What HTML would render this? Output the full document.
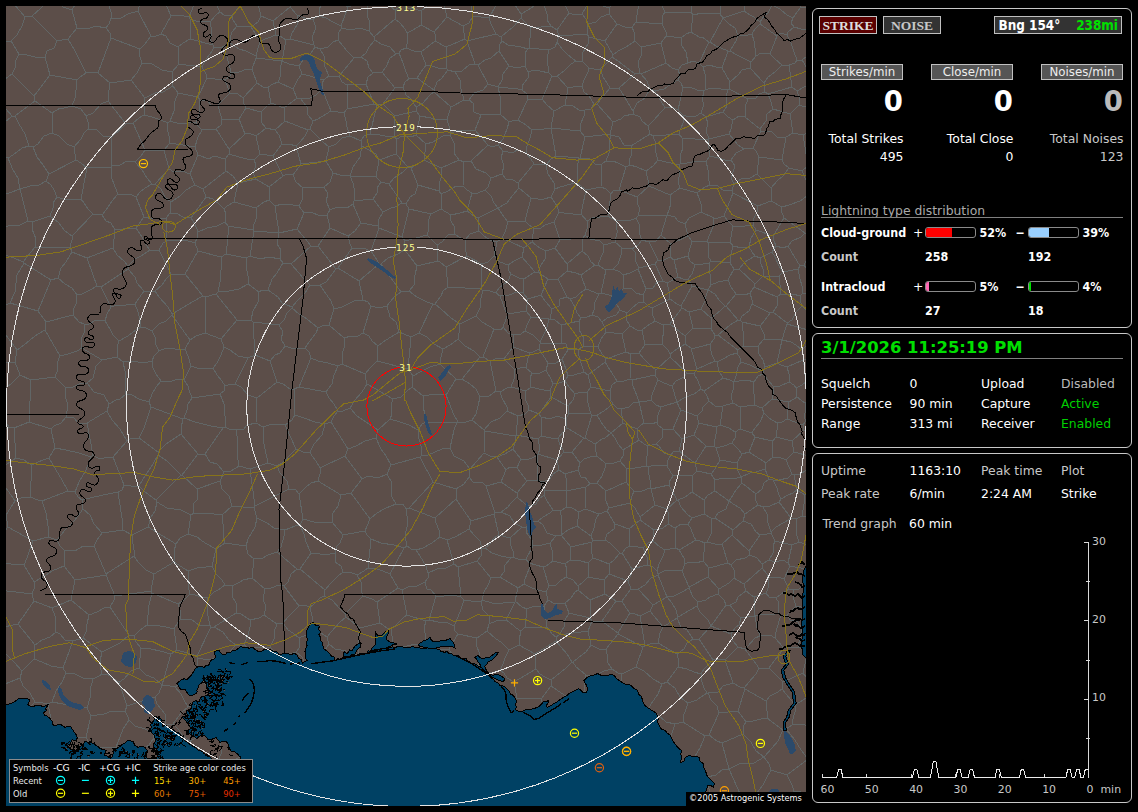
<!DOCTYPE html>
<html><head><meta charset="utf-8"><title>Lightning</title>
<style>
html,body{margin:0;padding:0;background:#000;}
body{width:1138px;height:812px;position:relative;overflow:hidden;font-family:"DejaVu Sans","Liberation Sans",sans-serif;font-size:12.4px;color:#fff;}
#map{position:absolute;left:6px;top:6px;width:800px;height:800px;background:#5c4e49;overflow:hidden;}
#map svg{position:absolute;left:0;top:0;}
.pn{position:absolute;left:812px;width:318px;border:1px solid #c8c8c8;border-radius:6px;background:#000;}
.t{position:absolute;white-space:nowrap;line-height:1;}
.r{text-align:right;}
.b{font-weight:bold;font-family:"DejaVu Sans Condensed","DejaVu Sans","Liberation Sans",sans-serif;}
.bw{font-weight:bold;}
.g{color:#c8c8c8;}
.btn{position:absolute;box-sizing:border-box;border:1px solid #c0c0c0;text-align:center;white-space:nowrap;}
.bar{position:absolute;box-sizing:border-box;width:51px;height:11px;border:1px solid #8a8a8a;border-radius:3px;overflow:hidden;background:#000;}
.bar i{display:block;height:100%;}
</style></head><body>
<div id="map"><svg width="800" height="800" viewBox="0 0 800 800" shape-rendering="crispEdges" fill="none" stroke-width="1">
<path d="M-14 391L-3 383L5 378L14 369M14 369L9 356M9 356L0 356L-14 354L-23 354M81 -18L76 -11L70 -3L66 4M66 4L57 1L53 -4L44 -6M-24 7L3 -8M100 -8L102 -3L105 6L105 12M66 4L71 22M105 12L103 18L100 22M71 22L82 23L89 20L100 22M819 720L806 721L795 718L786 719M802 753L795 744L789 734L780 723M786 719L780 723M3 421L-3 412L-6 402L-14 392M3 421L-22 432M14 369L25 374M25 374L23 416M8 422L3 421M8 422L23 416M105 12L115 12L122 8L132 5M137 -5L134 -2L132 5M100 22L104 27L105 32M105 32L134 43M132 5L145 30M134 43L138 39L145 30M104 77L92 67M104 77L125 74M92 67L105 32M125 74L131 67L133 63L136 57M134 43L133 48L136 57M703 36L693 57M703 36L696 31L693 31L685 26M685 26L680 28L675 32M675 32L676 40L680 46L682 57M693 57L687 55L682 57M607 49L612 45L620 41L629 35M607 49L606 51M629 35L635 41M635 41L636 48L632 56L634 67M634 67L629 68M606 51L612 55L620 61L629 68M588 98L591 98M588 98L583 90L578 86L576 80M583 62L582 66L578 74L576 80M583 62L588 63L594 63M594 63L597 71L601 77L604 82M591 98L604 82M606 51L600 58L594 63M629 68L613 82M613 82L604 82M440 261L442 281M440 261L434 256L432 255M432 255L411 260M427 298L429 298M427 298L421 296L411 291L403 285M442 281L437 285L435 290L429 298M403 285L408 279L409 269L411 260M554 234L549 242M554 234L548 216M526 236L527 228L527 222M526 236L534 242L540 245M548 216L539 219L535 222L527 222M540 245L549 242M526 236L518 242M518 242L516 251M529 266L516 251M529 266L532 266M540 245L539 253L535 259L532 266M789 699L789 706L787 713L786 719M789 699L797 694L805 689L813 688M332 360L322 357L312 355L305 352M332 360L328 369L326 378L320 386M305 352L293 381M320 386L293 381M-15 542L-8 533L-5 530L2 521M-44 498L-27 500L-16 506L0 509M0 509L2 521M49 371L55 377L59 381M49 371L25 374M23 416L45 423M59 381L59 389L62 400L60 411M45 423L48 420L55 417L60 411M49 371L52 363L51 357L54 350M59 381L67 381L73 378L81 377M54 350L62 348L71 345L76 342M76 342L96 354M81 377L87 372L90 360L96 354M122 260L122 263M122 260L129 253L135 250L144 244M122 263L129 271L131 277L138 285M144 244L153 244M153 244L165 268M165 268L160 273L156 279L149 285M149 285L144 285L138 285M32 305L4 297M32 305L40 316M39 324L40 316M39 324L29 330L18 339L11 344M11 344L-9 317M-8 301L-3 300L4 297M18 257L45 274M18 257L11 269L9 286L4 297M45 274L32 305M67 309L40 316M67 309L68 302L70 298L71 289M45 274L52 272M52 272L59 278L66 282L71 289M54 350L39 324M67 309L73 316L78 318M78 318L79 325L75 333L76 342M9 356L11 344M18 257L17 256M-9 246L2 250L8 252L17 256M109 224L105 217L100 215L96 209M109 224L107 242M107 242L81 252M96 209L87 208M87 208L66 230M81 252L66 246M66 230L66 234L64 241M64 241L66 246M130 222L125 222L117 223L109 224M130 222L136 231L140 239L144 244M122 260L118 255L111 249L107 242M95 281L122 263M95 281L91 280M91 280L81 252M44 210L53 217L59 225L66 230M44 210L47 202L47 197L51 191M51 191L57 193L67 194L75 193M75 193L78 197L82 203L87 208M52 272L55 262L60 256L66 246M71 289L76 288L84 284L91 280M26 216L26 223L30 233L29 241M26 216L44 210M29 241L64 241M17 256L29 241M92 67L88 66L80 67M71 22L62 33M62 33L69 45L74 55L80 67M14 183L-8 191M14 183L22 215M22 215L14 219L2 220L-7 222M26 216L22 215M104 77L103 84L102 95M66 100L75 103L80 110M66 100L69 92L70 84L71 74M71 74L74 71L80 67M80 110L87 107L95 98L102 95M-15 148L-5 149L2 152M14 183L14 183M2 152L7 164L12 172L14 183M51 191L48 184L45 179L40 175M14 183L24 180L33 179L40 175M81 162L75 157L70 154M81 162L75 193M40 175L43 168M70 154L43 168M125 74L139 92M136 57L146 58L156 64L166 66M166 66L167 80M139 92L149 87L157 86L167 80M591 98L607 116M613 82L627 105M607 116L615 113L618 110L627 108M627 105L627 108M717 12L723 18L729 22L732 29M717 12L704 36M732 29L730 35L724 45M704 36L710 40L715 42L722 45M724 45L722 45M745 56L737 52L731 49L724 45M745 56L750 50M750 50L749 42L748 35L746 28M746 28L738 30L732 29M697 61L703 59L710 61L716 62M697 61L693 57M716 62L722 45M703 36L704 36M744 62L745 56M744 62L736 64L732 69L724 76M724 76L716 62M766 -1L774 3L781 9L787 12M787 12L789 9L795 1M795 1L794 -7L789 -10L788 -16M812 2L795 1M766 -1L762 7L758 10L754 16M754 16L748 11L744 9L738 5M739 -13L739 -2L738 5M754 16L754 18M754 18L749 23L746 28M717 12L717 12M738 5L717 12M660 57L635 68M660 57L666 62L672 64M672 64L674 69L672 74M672 74L665 78L658 83L649 85M635 68L641 75L644 83M644 83L649 85M635 41L655 37M655 37L660 57M634 67L635 68M660 30L675 32M660 30L655 37M682 57L676 59L672 64M659 102L649 85M659 102L666 101L672 104M672 104L677 82M677 82L675 77L672 74M627 105L631 97L639 92L644 83M659 102L655 106L647 115L642 120M642 120L636 115L634 111L627 108M440 261L461 250M475 283L442 281M475 283L476 258M476 258L461 250M373 -6L379 -5L385 1L389 4M397 -1L392 2L389 4M393 47L395 44L400 42M393 47L397 57L400 66L403 73M400 42L408 45L415 46M415 46L420 59M420 59L415 66L411 72M403 73L411 72M390 48L393 47M390 48L384 41L375 38L369 34M369 34L368 31M368 31L376 24L383 18L389 13M401 27L399 23L394 17L389 13M401 27L402 34L400 42M441 63L432 62L426 60L420 59M441 63L440 41M440 41L429 35M429 35L415 46M368 31L363 25M389 13L390 10L389 4M363 25L364 17L361 9L361 -1M325 -11L342 1M342 1L348 -1L353 -3M617 269L624 267L632 263M617 269L617 275L618 282M632 263L640 283M618 282L625 282L630 287L637 289M640 283L637 289M763 554L767 547L767 540L769 535M763 554L769 556L777 554L782 557M782 557L786 539M769 535L786 539M793 536L786 539M793 536L802 539M782 557L784 560M784 560L800 563M813 591L797 580M800 563L801 570L797 580M813 688L797 667M801 649L797 667M807 613L796 623M796 623L792 641M801 649L799 644L792 641M789 699L776 683M776 683L777 676M797 667L777 676M761 712L761 705L760 695M761 712L755 713L747 715L740 716M760 695L739 683M739 683L732 705M740 716L732 705M777 724L780 723M777 724L761 712M776 683L772 686L764 690L760 695M777 724L772 735L766 742L758 751M758 751L750 745L745 736L737 728M737 728L737 721L740 716M802 753L781 769M781 769L786 779L788 785M817 789L788 785M758 751L758 751M781 769L765 764M758 751L763 758L765 764M279 340L274 347L269 349L264 355M279 340L275 333L277 326L273 319M247 316L273 319M247 316L249 349M249 349L264 355M305 352L303 346L299 342M299 342L293 342L285 342L279 340M271 376L277 378L284 383L288 383M271 376L264 355M293 381L288 383M251 392L271 376M251 392L242 389L235 381L229 378M242 352L229 378M242 352L249 349M475 283L477 285M429 298L435 303L445 312L454 318M477 285L474 295L474 302L470 310M454 318L470 310M9 495L15 492L24 491M9 495L-11 466M24 491L26 459M-11 466L10 452M10 452L18 454L26 459M0 509L9 495M8 422L10 452M60 411L68 412L72 417L81 417M103 398L98 389L88 386L81 377M103 398L101 405M101 405L81 417M45 423L49 442M26 459L32 456L37 454L43 452M43 452L49 442M103 398L110 394L114 393L120 388M96 354L111 351M111 351L117 356M117 356L119 365L119 375L120 388M133 432L126 432L121 435M133 432L138 422L141 413L145 401M145 401L143 396M101 405L106 414L114 423L121 435M120 388L126 389L133 393L143 396M251 392L250 417M229 378L222 379L219 380M219 380L218 385L214 388M250 417L241 419L238 423L230 424M230 424L223 423L219 421M219 421L219 410L218 398L214 388M129 298L132 306L134 314L135 321M129 298L120 299L111 299L105 301M105 301L101 308L99 315M99 315L104 323L107 329L113 335M113 335L122 330L127 326L135 321M95 281L105 301M138 285L129 298M78 318L83 318L90 314L99 315M111 351L111 341L113 335M51 35L48 42L41 45L39 51M51 35L26 10M39 51L29 51L21 49L13 48M19 11L26 10M19 11L16 20L11 29L5 35M5 35L13 48M62 33L51 35M44 69L39 51M44 69L71 74M44 -6L26 10M44 69L28 90M28 90L6 68M6 68L9 62L10 54L13 48M3 -8L19 11M-19 34L-9 36L-3 36L5 35M-7 73L-1 73L6 68M6 110L0 103L-8 99L-12 92M6 110L-19 132M29 95L9 110M29 95L46 107M9 110L13 118L19 128L23 140M46 107L46 127M46 127L38 130L32 138L27 141M23 140L27 141M28 90L29 95M6 110L9 110M66 100L58 102L54 102L46 107M2 152L7 149L16 142L23 140M80 110L82 116L82 123M82 123L78 127L75 133L68 141M68 141L61 138L53 130L46 127M68 141L70 154M43 168L37 159L31 151L27 141M216 41L224 37M216 41L220 48L223 58L225 66M224 37L233 43L240 45L250 50M225 66L233 66L241 63L246 63M246 63L250 52M250 50L250 52M280 34L274 30L270 29M280 34L276 55M276 55L250 52M250 50L254 35M254 35L270 29M284 1L267 15M284 1L291 9M280 34L284 33M284 33L286 27L291 19L291 9M267 15L270 29M231 20L245 21M231 20L227 14L226 10M226 10L239 -7M245 21L252 16L255 10M255 10L252 -2M224 37L224 32L226 26L231 20M254 35L251 30L245 21M267 15L255 10M284 1L284 -1M284 33L308 39M291 9L301 13L307 13M307 13L310 22L306 31L308 39M317 -10L318 -4L313 3L313 10M307 13L313 10M342 1L335 20M313 10L320 12L327 16L335 20M363 25L354 22L344 24L336 22M336 22L335 20M308 39L309 41M332 34L327 36L322 41L314 43M332 34L333 26L336 22M309 41L314 43M237 92L251 77M237 92L232 88L224 87M251 77L246 63M225 66L224 70L219 74M219 74L224 87M81 162L105 161M96 209L100 204L106 195L112 188M112 188L109 181L105 170L105 161M130 222L135 215L138 211M161 235L160 212M161 235L157 237L153 244M160 212L152 212L147 213L138 211M112 188L117 188L124 188L130 191M138 211L130 191M166 66L173 58M167 80L172 87M172 87L192 91M192 91L201 72M201 72L200 68L196 61M173 58L180 59L189 60L196 61M216 41L208 41M201 72L209 73L219 74M196 61L201 52L206 45L208 41M226 10L218 9L214 6M208 41L207 39M207 39L204 33L206 26L204 16M204 16L210 9L214 6M209 -4L214 6M155 28L160 30L164 37L172 41M155 28L165 10M165 10L173 9L183 11M172 41L177 37L184 33M184 33L184 27L185 17L184 13M183 11L184 13M145 30L148 31L155 28M173 58L172 41M157 -8L165 10M190 -8L188 -2L186 4L183 11M207 39L184 33M204 16L198 15L190 15L184 13M647 130L673 128M647 130L644 128M644 128L642 120M672 104L677 109M677 109L678 115L674 124L673 128M647 130L650 138L649 144L652 154M652 154L673 159M674 158L673 159M674 158L675 147L677 142L676 132M676 132L673 128M717 106L721 100L720 91L722 83M717 106L700 111M700 111L695 107M695 107L698 98L696 94L698 85M722 83L715 83L705 82L699 84M699 84L698 85M677 109L683 111L690 110L695 107M676 132L702 134M702 134L703 133M703 133L700 125L702 118L700 111M677 82L684 81L691 84L698 85M697 61L699 68L699 76L699 84M724 76L723 83M723 83L722 83M800 415L807 413L817 411M800 415L798 411L800 403L799 397M813 393L805 394L799 397M714 -13L714 8M714 8L704 7L696 7L687 9M686 -4L686 -1L685 6M687 9L685 6M717 12L714 8M685 26L686 17L687 9M629 35L628 26L626 21M660 30L660 26L656 18M626 21L630 16M630 16L656 18M685 6L659 6M655 -6L657 2L659 6M656 18L656 11L659 6M607 49L599 35M626 21L619 21L611 18M611 18L599 35M583 62L578 57L576 55M599 35L583 31M576 55L577 46L582 38L583 31M588 98L585 103L579 104M576 80L567 81L562 82M579 104L573 104L567 100L559 99M559 99L562 82M607 116L604 128M579 104L578 110L574 119L574 125M604 128L579 131M574 125L579 131M644 128L625 140M604 128L605 129M625 140L618 139L613 131L605 129M432 255L431 245L431 239M459 234L459 241L461 250M459 234L455 232L448 228M448 228L442 229L436 236L431 239M435 188L435 203M435 188L442 185L450 180L457 180M461 205L466 187M461 205L454 207L445 209M445 209L435 203M466 187L461 184L457 180M453 154L458 156M453 154L435 162M435 188L433 185M435 162L436 168L433 179L433 185M457 180L458 156M548 216L553 206M527 222L522 218L519 215M553 206L551 200L545 191M545 191L538 193L532 193L525 192M519 215L525 192M397 -1L402 2L409 3L415 5M428 -3L421 0L415 5M401 27L407 24L415 19M415 5L415 19M429 35L430 30L428 26M415 19L428 26M403 285L395 286M411 260L408 256L402 248L398 244M398 244L392 248L382 252L375 258M375 258L395 286M625 348L624 373M625 348L633 347M624 373L626 374M626 374L649 369M649 369L650 364M650 364L643 358L638 353L633 347M664 351L664 348M664 351L681 367M664 348L671 343L679 338M681 367L688 368M679 338L685 342M685 342L691 363M691 363L688 368M490 287L494 290M490 287L493 282L502 275L505 268M494 290L503 289L511 286L517 287M505 268L513 272L518 273M518 273L517 287M477 285L481 284L490 287M497 321L502 308M497 321L495 324L488 323M502 308L499 304L497 298L494 290M488 323L483 320L476 316L470 310M502 259L503 265L505 268M502 259L494 256L488 250M488 250L482 256L476 258M529 266L524 269L518 273M516 251L508 255L502 259M502 308L520 305M517 287L522 293M520 305L522 293M532 266L536 269L542 273M542 273L535 289M535 289L522 293M554 234L577 232M549 242L561 258M561 258L576 245M576 245L576 237L577 232M581 215L575 208M581 215L581 223L579 229M553 206L558 207L567 208L575 208M579 229L577 232M607 263L612 258L615 249L616 242M607 263L600 264M609 236L616 242M609 236L598 239M598 239L597 247L595 251L592 259M600 264L598 263L592 259M576 245L582 250L585 256L589 259M579 229L584 233L594 235L598 239M592 259L589 259M552 273L561 265M552 273L561 291M561 265L570 267L575 269M561 291L564 293M564 293L570 291L574 287L580 283M580 283L575 269M542 273L552 273M561 258L561 265M546 303L539 295L535 289M546 303L553 300L554 293L561 291M589 259L575 269M620 346L600 353M620 346L616 328M600 353L596 348L592 341M592 341L595 333L600 326M616 328L600 326M625 348L620 346M624 373L618 375L611 375M600 353L599 356M599 356L611 375M811 512L802 510L796 510M793 536L791 530L790 520L790 513M790 513L796 510M663 479L671 494M663 479L645 483M671 494L661 503M661 503L649 499M645 483L649 499M805 603L790 600M797 580L793 583L787 584M787 584L787 591L790 600M796 623L792 616L784 614L781 609M790 600L781 609M792 641L783 641L777 641M777 676L763 662M763 662L768 655L774 648L777 641M749 610L757 608L765 609L772 607M749 610L750 616L751 622L754 630M772 607L775 609M775 609L773 615L770 626L769 632M754 630L764 629L769 632M781 609L775 609M769 632L777 641M788 785L780 801M765 764L761 771L757 779L750 788M750 788L755 796L761 800L767 807M703 798L704 787L702 779L701 771M703 798L733 793M733 793L735 790M735 790L723 763M701 771L710 769L717 763L723 763M723 763L723 763M696 807L698 801L703 798M694 808L685 799L678 793L668 783M682 761L668 783M682 761L701 771M734 818L733 793M750 788L744 790L735 790M758 751L748 757L735 757L723 763M737 728L716 737M716 737L723 763M328 303L325 295L318 285L314 279M328 303L323 319M286 302L286 301M286 302L293 308L301 313L312 322M286 301L292 294L299 287L304 279M314 279L304 279M323 319L316 320L312 322M245 314L247 305L252 296L253 286M245 314L247 316M273 319L278 314L281 307L286 302M253 286L256 284L262 284M262 284L272 291L276 297L286 301M299 342L303 336L310 327L312 322M262 284L266 273L271 267L277 257M277 257L285 258M285 258L293 267L297 272L304 279M294 519L289 520L279 524M294 519L297 513M297 513L293 488M279 524L268 522L261 517L251 512M251 512L248 502M249 500L248 502M249 500L283 483M283 483L289 483L293 488M326 516L327 507L332 500L335 489M326 516L317 516L308 516L297 513M335 489L312 475M293 488L300 481L305 477L312 475M342 443L325 416M342 443L350 440L359 435L370 432M370 432L372 424M372 424L360 416L351 410L344 402M344 402L337 405L332 405M332 405L328 410L325 416M384 413L372 424M384 413L394 416L403 419L412 424M415 450L416 443L413 433L412 424M415 450L414 451M370 432L375 443L380 450L385 459M385 459L414 451M332 360L336 358M323 319L338 332M336 358L336 348L338 342L338 332M365 300L362 296L357 294M365 300L357 327M357 294L348 295L336 301L328 303M357 327L352 330L345 330L338 332M384 413L386 408L385 399L387 393M344 402L349 394L356 386L361 378M387 393L361 378M320 386L323 392L328 398L332 405M336 358L359 368M361 378L360 374L359 368M412 424L416 418L420 416M387 393L395 391L401 385L406 381M406 381L417 390M417 390L417 401L419 408L420 416M415 450L422 449L436 443L444 442M444 442L446 433L448 424L451 416M420 416L451 416M8 716L-1 715L-5 714M8 716L29 696M-16 684L14 672M29 696L24 687L17 680L14 672M39 740L43 732L48 728M39 740L17 738M17 738L8 716M48 728L42 698M29 696L37 697L42 698M-7 622L12 618M-9 643L1 649L8 656L16 665M29 639L12 618M29 639L28 653M28 653L16 665M14 672L16 665M149 285L153 291L162 301L166 308M146 325L153 318L160 315L166 309M146 325L140 322L135 321M166 308L166 309M179 268L165 268M179 268L197 290M166 308L178 301L186 296L197 290M117 356L126 355L138 357L146 355M143 396L146 388L150 381L155 375M146 355L147 362L150 368L155 375M146 325L149 331L150 339L153 345M146 355L148 350L153 345M276 55L276 55M251 77L257 81L262 81M262 81L267 78L272 76M276 55L274 63L275 69L272 76M309 41L305 47L297 54L293 60M276 55L283 58L293 60M369 34L363 41L360 47L355 51M332 34L337 40L341 45L348 52M355 51L348 52M390 48L384 52L380 61L376 66M376 66L367 67M355 51L361 55L363 62L367 67M314 43L318 50L319 61L323 70M348 52L333 70M323 70L333 70M367 67L362 71L360 78M360 78L356 78L348 78L341 79M333 70L336 76L341 79M192 91L194 94M224 87L212 99M194 94L201 94L205 99L212 99M240 102L238 98L237 92M240 102L233 113M212 99L216 114M233 113L216 114M233 113L239 128M216 114L215 119L210 123M210 123L223 143M223 143L239 128M787 12L785 17L788 21M788 21L795 23L804 23L811 27M750 50L755 47L764 48M754 18L771 30M764 48L771 30M788 21L782 26L781 29M781 29L775 27L771 30M805 48L800 51L796 54M809 75L796 54M781 29L785 37L788 46L791 54M796 54L791 54M784 108L787 127M784 108L787 105L793 99M810 104L793 99M807 124L797 129M797 129L787 127M791 85L809 75M791 85L794 94L793 99M703 133L723 128M717 106L722 111L727 114M723 128L725 123L727 114M723 83L742 93M742 93L739 101L739 111M727 114L733 110L739 111M803 159L800 148L799 141L797 129M603 2L614 -9M603 2L597 0L594 -6L588 -10M630 16L631 9L632 3L632 -4M603 8L611 18M603 8L603 2M576 55L570 55M562 82L551 70M570 55L565 58L558 65L551 70M559 99L548 105M551 70L546 70M546 70L536 93M548 105L541 99L536 93M574 125L545 122M548 105L545 122M579 131L574 152M574 152L583 152L589 158L596 158M605 129L603 137L603 147L600 155M596 158L600 155M571 177L565 178L554 181L549 183M571 177L572 170L571 162L573 152M549 183L548 177L542 168L540 159M573 152L550 150M540 159L545 153L550 150M575 208L580 184M545 191L549 183M580 184L571 177M574 152L573 152M580 184L595 181M596 158L595 181M545 122L545 122M545 122L550 150M520 147L525 153L528 158M520 147L521 140L524 132L526 124M528 158L540 159M545 122L538 123L534 123L526 124M445 101L458 94M445 101L428 86M458 94L455 83L454 74L449 66M428 86L428 84M428 84L431 76L435 73L442 64M442 64L449 66M441 63L442 64M411 72L428 84M403 203L425 208M403 203L396 231M425 208L422 215L423 223L421 229M421 229L399 235M396 231L399 235M445 209L444 213L449 222L448 228M435 203L425 208M431 239L421 229M398 244L399 235M518 242L496 232M519 215L502 216M502 216L499 226L496 232M488 250L491 236M496 232L491 236M459 234L464 228L473 225M491 236L484 234L478 230L473 225M461 205L468 210L472 212M473 225L472 212M513 182L507 189L501 197L492 202M513 182L512 177M512 177L507 174L500 173L496 168M496 168L485 172M485 172L482 181L479 184M479 184L485 190L488 197L492 202M492 202L492 202M525 192L513 182M502 216L498 211L492 202M528 158L522 165L517 171L512 177M520 147L511 144L507 147L497 145M497 145L495 152L498 159L496 168M492 139L497 145M492 139L486 141L482 139M482 139L465 155M465 155L470 163L480 167L485 172M466 187L472 187L479 184M465 155L458 156M472 212L492 202M467 10L463 17L457 20M467 10L462 -15M457 20L441 11M438 -1L441 11M483 12L467 10M483 12L490 -1M440 41L459 33M459 33L457 20M428 26L441 11M346 242L354 242L357 242L365 245M346 242L332 262M332 262L353 275M353 275L373 258M365 245L371 254L373 258M373 222L371 228L367 239L365 245M373 222L372 220M342 230L349 225L355 217M342 230L344 238L346 242M355 217L372 220M357 294L353 275M330 263L327 267L320 276L314 279M330 263L332 262M375 258L373 258M381 300L373 302L365 300M381 300L384 296L389 290L395 286M373 222L396 231M639 339L656 338M639 339L636 324M656 338L656 333L658 326L657 319M636 324L641 320L649 315M649 315L657 319M650 364L664 351M633 347L639 339M664 348L662 344L656 338M624 320L616 328M624 320L631 324L636 324M664 318L657 319M664 318L679 330M679 330L679 338M646 302L642 300L638 296M646 302L646 307L649 315M638 296L632 297L626 302L621 307M624 320L620 313L621 307M664 318L676 302M676 302L675 300M646 302L664 293M675 300L671 298L664 293M681 367L678 371L670 375L666 380M695 383L692 375L688 368M695 383L688 388L680 391L671 396M671 396L666 380M649 369L652 374M652 374L658 377L666 380M683 306L695 303M683 306L685 314L687 322M695 303L705 312M687 322L705 323M705 323L706 318L705 312M679 330L687 322M676 302L683 306M640 283L647 282L651 276L657 275M637 289L638 296M664 293L663 285L661 277M657 275L661 277M675 300L686 280M695 303L699 295L700 290L702 284M686 280L702 284M608 291L610 297L614 304M608 291L603 289L595 287M614 304L610 309L601 312L596 316M595 287L593 288M593 288L589 296L588 304L586 309M586 309L592 311L596 316M618 282L613 287L608 291M621 307L614 304M617 269L614 266L607 263M600 264L595 287M600 326L599 322L596 316M580 283L593 288M575 312L571 307L569 301L564 293M575 312L581 311L586 309M737 515L745 518L750 526L754 529M737 515L727 524M726 529L743 545M726 529L727 524M743 545L754 529M744 549L751 552L756 558M744 549L743 545M756 558L763 554M769 535L765 527M765 527L761 528L754 529M757 501L761 508L762 517L765 526M757 501L764 500L773 496M773 496L785 512M765 526L770 521L779 516L785 512M739 508L737 515M739 508L752 499M752 499L757 501M765 527L765 526M790 513L785 512M673 445L689 457M673 445L667 446L665 449M667 470L687 469M667 470L661 460M687 469L691 465M665 449L662 454L661 460M689 457L691 465M676 433L673 445M676 433L688 429M689 457L700 440M688 429L700 440M739 508L734 502L727 498L723 495M752 499L749 493L750 488M750 488L736 477M723 495L727 489L730 484L736 477M716 737L711 735L703 729M732 705L713 707M713 707L703 729M681 761L673 756L668 749L660 746M681 761L688 752L694 742L699 730M669 718L660 746M669 718L677 716M677 716L699 730M681 761L682 761M703 729L699 730M682 518L675 518L669 522M682 518L686 512M671 494L672 494M661 503L663 509L662 518M669 522L662 518M686 512L681 508L675 501L672 494M667 470L663 476L663 479M687 469L686 486M686 486L679 491L672 494M645 483L644 482M661 460L655 459L648 459L642 461M642 461L643 469L644 474L644 482M649 499L634 511M628 485L636 485L644 482M628 485L626 490L624 497M634 511L629 502L624 497M662 518L657 522L648 524M648 524L634 514M634 511L634 514M778 573L783 583M778 573L772 571L762 571M783 583L775 588L770 592M762 571L763 580L760 587M760 587L763 591L770 592M784 560L778 573M787 584L783 583M756 558L756 562M756 562L761 568L762 571M772 607L773 597L770 592M749 610L748 610M748 610L748 591M748 591L754 589L760 587M763 662L753 662M754 630L749 632L742 640L739 643M753 662L739 643M739 683L738 682M753 662L750 668L743 676L738 682M748 610L735 612M735 612L733 619L729 622L725 628M725 628L727 635L732 641M732 641L739 643M601 810L597 806L594 798M558 822L561 812L565 800L565 789M594 798L565 789M545 778L563 785M545 778L525 809M565 789L563 785M541 772L545 778M541 772L543 761L544 753L546 745M546 745L552 743M552 743L582 759M563 785L582 759M668 783L668 783M660 746L653 747M653 747L649 757L644 762L639 771M668 783L639 771M231 314L210 288M231 314L245 314M210 288L212 286M253 286L246 281L242 278M212 286L223 285L233 283L242 278M50 626L44 631L36 634L29 639M50 626L49 619L49 610L46 602M12 618L28 595M46 602L28 595M-7 584L26 588M26 588L28 595M250 713L249 708L253 702L253 695M250 713L255 714L264 719L269 720M253 695L281 685M269 720L273 714L282 706L286 697M286 697L284 691L285 687M285 687L285 686M285 686L281 685M251 512L249 521L242 533L240 540M248 502L226 500M216 509L226 500M216 509L217 518L217 530L219 537M240 540L219 537M182 565L183 574L182 580L184 588M182 565L191 562L200 561L206 560M184 588L189 589L195 591L202 592M202 592L208 586L212 584L219 579M219 579L216 574L210 568L206 560M168 556L182 565M168 556L169 548L168 545L170 538M170 538L174 532L182 528M182 528L191 531L199 537L210 543M206 560L210 543M185 509L182 528M185 509L188 507M216 509L208 508L198 507L188 507M210 543L219 537M250 417L257 421M230 424L232 436L231 447L233 460M244 463L233 460M244 463L262 457M262 457L259 443L257 433L257 421M244 463L249 500M283 483L281 475L274 467L271 460M262 457L271 460M671 396L671 396M671 396L655 401M652 374L649 381L646 389L645 394M655 401L650 399L645 394M626 374L627 380L631 390L633 396M633 396L633 396M633 396L641 395L645 394M297 733L302 735L309 739L317 743M297 733L300 727L302 718M317 743L332 737M302 718L311 716L317 710L327 709M327 709L338 723M332 737L333 729L338 723M381 468L386 477L385 489L390 498M381 468L372 472L362 470L356 473M356 473L345 487M345 487L364 513M364 513L371 507L380 502L390 498M339 450L356 473M339 450L342 443M385 459L381 468M339 450L314 462M335 489L345 487M312 475L314 468L314 462M488 323L477 351M454 318L453 327L452 333M477 351L474 351M474 351L468 345L459 340L452 333M427 298L413 327M413 327L421 331L428 338L437 343M452 333L447 337L444 339L437 343M440 389L444 399L447 407L452 416M440 389L450 373M450 373L456 373M456 373L464 378L470 383L474 391M474 391L472 400L470 408L466 414M466 414L460 416L452 416M417 390L423 389L431 388L440 389M451 416L452 416M406 381L406 374L407 370M407 370L414 366L424 361L434 358M434 358L450 373M474 351L456 373M437 343L435 351L434 358M477 351L484 355M484 355L490 385M490 385L483 390L474 391M501 405L501 401L496 392L494 386M501 405L494 412L485 416L478 424M478 424L466 414M494 386L490 385M67 635L57 662M67 635L77 632M77 632L96 646M57 662L60 667M60 667L67 667L77 672L87 673M96 646L94 655L94 660L96 668M96 668L93 670L87 673M50 626L54 628L59 634L67 635M28 653L36 656L45 660L57 662M83 609L81 618L80 626L77 632M83 609L65 594M65 594L46 602M123 629L114 637L104 642L96 646M123 629L104 601M104 601L98 602L91 606L83 609M42 698L46 696M46 696L50 685L56 676L60 667M81 702L67 699L57 698L46 696M81 702L84 692L84 684L87 673M230 607L208 621M230 607L235 608L244 614M244 614L244 621L242 629L238 639M238 639L230 639M230 639L223 634L217 626L208 621M39 740L42 749L46 755L47 766M17 738L12 745L5 752L2 756M2 756L20 777M47 766L42 769L39 774M20 777L39 774M-18 790L10 795M15 809L11 800L10 795M149 775L146 778M149 775L142 769L136 757L132 750M132 750L118 750M118 750L113 763L113 774L108 785M146 778L133 779L121 782L108 785M2 756L-3 757M20 777L10 795M133 432L152 446M145 401L177 413M152 446L160 438L166 434L175 428M175 428L175 422L177 413M186 392L182 398L181 404L178 412M186 392L183 384L182 380L178 374M155 375L163 376L172 373L178 374M177 413L178 412M219 421L217 422M214 388L186 392M178 412L189 416L205 420L217 422M81 417L87 449M121 435L107 451M107 451L98 452L92 452L87 449M49 442L60 444L73 447L85 451M87 449L85 451M152 449L161 455L170 464L175 469M152 449L147 458L139 470L133 480M175 469L150 494M133 480L138 485L143 489L150 494M152 446L152 449M107 451L118 479M133 480L125 480L118 479M185 509L175 504L161 502L151 496M170 538L142 521M151 496L149 505L145 511L142 521M118 479L116 484L112 486M112 486L114 499L116 512L117 524M150 494L151 496M142 521L126 529M126 529L117 524M184 334L190 330L199 327M184 334L179 343M179 343L182 350L185 360M185 360L191 362L202 363L207 362M207 362L211 357L215 349L218 341M199 327L215 333M215 333L218 341M166 309L184 334M197 290L199 291M199 291L199 327M153 345L160 342L169 343L179 343M178 374L185 360M219 380L216 375L211 369L207 362M242 352L232 350L224 344L218 341M231 314L215 333M210 288L199 291M291 223L298 207M291 223L296 229L302 236L305 240M298 207L304 206L315 210L321 209M312 240L305 240M312 240L324 222M324 222L323 217L321 209M293 200L298 207M293 200L287 199L276 198L269 200M269 200L273 227M273 227L291 223M285 258L305 240M330 263L312 240M342 230L324 222M403 73L399 76L397 81M428 86L424 89L417 97L410 101M397 81L400 89L405 93L410 101M376 66L389 82M397 81L389 82M293 60L296 68M272 76L287 83M296 68L292 73L287 83M323 70L319 73M296 68L304 70L312 73L319 73M189 141L164 137M189 141L191 134L192 131L196 124M190 116L192 120L196 124M190 116L181 117L174 118L164 115M164 137L163 130L161 121L162 117M164 115L162 117M194 94L193 102L193 108L190 116M210 123L205 123L196 124M172 87L169 95L168 105L164 115M139 92L138 109M138 109L146 111L155 114L162 117M106 159L114 159L121 155L129 156M106 159L105 151L105 139L106 131M106 131L120 118M129 156L135 150L139 144M139 144L127 117M120 118L127 117M105 161L106 159M130 191L134 186L139 182L146 178M146 178L141 172L136 164L129 156M82 123L91 124L97 130L106 131M102 95L120 118M138 109L133 112L127 117M164 137L158 144M158 144L139 144M786 81L783 59M786 81L762 88M758 77L762 71L769 66L776 59M758 77L758 80L759 86M776 59L783 59M759 86L762 88M791 85L786 81M791 54L789 57L783 59M767 103L774 105L784 108M767 103L764 93L762 88M744 62L758 77M764 48L769 53L776 59M742 93L750 92L753 88L759 86M767 103L761 108L760 115L754 123M754 123L739 111M753 151L750 145L747 142M753 151L776 154M747 142L755 125M755 125L765 125L771 131L780 131M776 154L780 131M738 143L732 139L728 134L723 128M738 143L747 142M754 123L755 125M787 127L780 131M803 159L796 165M783 162L796 165M783 162L778 158L776 154M674 158L681 157L692 155L700 155M673 159L674 167L672 175L674 182M674 182L691 187M691 187L699 181L704 179M704 179L702 170L702 164L700 155M702 134L704 150M738 143L730 147L725 154M725 154L719 154L712 152L704 150M704 150L700 155M685 342L689 342L697 340L704 338M705 323L709 329M709 329L708 333L704 338M691 363L709 355M704 338L705 345L706 349L709 355M717 372L713 365L711 356M717 372L698 385M698 385L695 383M711 356L709 355M603 8L595 11L590 16L582 18M583 31L581 28M582 18L581 28M570 55L562 49L556 43L551 36M543 67L546 70M543 67L542 60L541 52L543 44M551 36L549 41L543 44M581 28L553 30M551 36L553 30M522 66L528 64L534 65L543 67M522 66L519 60M519 60L519 57L519 47L522 43M522 43L523 42M543 44L523 42M516 84L521 88L522 93M516 84L508 82L502 82L492 81M522 93L512 114M492 81L494 90L494 100L494 108M494 108L503 116M503 116L509 114L512 114M522 66L522 72L516 80L516 84M536 93L522 93M492 81L492 81M492 81L496 74L497 68L503 60M519 60L511 62L503 60M526 124L520 119L512 114M492 81L482 78M482 78L477 84L468 87L463 94M475 109L468 106L467 97L463 94M475 109L494 108M492 139L497 133L501 123L503 116M482 139L469 124M469 124L475 109M581 215L586 212L594 211L602 210M595 181L600 183L605 188M605 188L602 210M609 236L611 227L611 224L610 215M602 210L610 215M493 45L493 40L496 35M493 45L485 52L479 54L472 59M461 35L490 28M461 35L469 58M496 35L495 31M469 58L472 59M490 28L495 31M503 60L493 45M522 43L515 41L502 39L496 35M482 78L472 59M459 33L461 35M483 12L485 18L490 28M449 66L456 65L463 59L469 58M463 94L458 94M636 234L643 236M636 234L632 239L626 243M643 236L652 254M626 243L630 247L629 254L633 262M633 262L649 258M649 258L652 254M661 209L655 229M661 209L632 210M655 229L650 235L643 236M632 210L630 212M630 212L634 220L633 227L636 234M616 242L626 243M630 212L623 215L617 214L610 215M665 238L655 229M665 238L664 251M664 251L658 254L652 254M632 263L633 262M657 275L649 258M705 312L709 309L715 304L719 300M702 284L702 284M719 300L713 294L709 288L702 284M682 250L684 255L689 259M682 250L668 254M668 254L672 271M689 259L686 268L682 273M672 271L677 273L682 273M664 251L668 254M661 277L672 271M686 280L682 273M703 257L697 258L689 259M703 257L705 279M705 279L702 284M562 400L563 407M562 400L545 391M545 391L533 408M560 413L551 410L544 413L535 411M560 413L563 407M533 408L535 411M585 408L563 407M585 408L583 401L581 393L581 386M562 400L567 394L569 388M569 388L575 386L581 386M599 356L582 369M604 385L606 379L611 375M604 385L585 381M585 381L582 369M497 321L502 327L507 329M520 305L525 311M507 329L515 328L519 325M525 311L521 319L519 325M569 388L563 381L559 375M585 381L581 386M582 369L578 366M578 366L568 369L562 370M559 375L562 370M592 341L577 340M578 366L576 360L573 350L572 344M577 340L572 344M575 312L573 315M577 340L578 332L573 324L573 315M800 415L797 419M783 396L781 413M783 396L791 391M799 397L791 391M781 413L797 419M714 454L710 442M714 454L731 457M710 442L718 440L726 437M726 437L732 443L736 448M731 457L736 448M705 468L696 466L691 465M705 468L709 463L714 454M700 440L708 440M708 440L710 442M735 471L735 471M735 471L732 465L731 457M705 468L709 474M709 474L717 472L727 473L735 471M675 404L673 401L671 396M675 404L691 410M698 385L701 390L703 395M691 410L696 405L697 401L703 395M676 433L667 423M667 423L675 404M688 429L693 417M691 410L693 417M708 440L709 433L710 428L710 421M693 417L710 421M723 495L709 485M723 495L720 503L712 507L709 512M709 485L702 489L698 494M698 494L698 508M698 508L705 512M705 512L709 512M723 495L723 495M709 474L708 479L709 485M736 477L735 471M727 524L709 512M686 486L698 494M686 512L698 508M716 538L709 538L701 536M716 538L726 529M701 536L705 528L705 519L705 512M748 591L740 585M735 612L729 606L724 599M724 599L730 596L732 591L740 585M756 562L738 578M740 585L738 578M669 718L660 716L652 709L641 706M677 716L677 711L680 703L682 697M661 676L669 682L674 691L682 697M661 676L656 678M656 678L652 688L645 698L641 706M653 747L644 744L640 737L630 731M633 713L630 731M633 713L639 707M641 706L639 707M597 707L611 708L623 710L633 713M597 707L596 700M639 707L632 696L625 686L615 678M596 700L603 694L609 683L615 678M630 661L616 668M630 661L638 665L647 673L656 678M615 678L616 668M587 758L602 770M587 758L591 749L590 741L595 736M621 738L595 736M621 738L622 769M622 769L602 770M594 798L596 790L601 778L602 770M582 759L587 758M566 720L563 727L555 735L552 743M566 720L589 723M589 723L595 736M597 707L589 723M630 731L625 736L621 738M630 775L636 772L639 771M630 775L622 769M654 805L629 794M616 810L621 806L626 798L629 794M668 783L654 805M630 775L631 780L632 790L629 794M232 718L238 720M232 718L217 727M238 720L244 744M217 727L214 735L216 745L213 753M213 753L219 754L226 756M226 756L244 744M294 813L301 795M325 799L312 790M325 799L323 809L325 815M301 795L308 794L312 790M273 728L271 736L262 744L260 751M273 728L294 734M294 734L292 741L290 750L287 762M260 751L263 758M263 758L279 766M287 762L285 766L279 766M238 720L250 713M269 720L273 728M244 744L260 751M297 733L294 734M302 718L286 697M317 743L316 750L315 757L312 766M312 766L304 763L296 761L287 762M236 777L242 779M236 777L234 771L228 765L226 756M242 779L263 758M280 779L279 771L279 766M280 779L301 795M312 790L313 781L317 775L316 771M312 766L316 771M247 788L268 794M247 788L237 813M271 809L268 794M242 779L247 788M280 779L268 794M232 177L250 173M232 177L227 170L220 165M220 165L219 160L219 153M248 154L241 153L233 151L223 148M248 154L250 159L247 167L250 173M219 153L223 148M228 196L232 177M228 196L250 202M250 202L258 196L263 194M263 181L250 173M263 181L263 194M218 203L221 200L228 196M218 203L213 198L207 193L200 191M200 191L197 183M197 183L220 165M223 143L223 148M254 148L250 130M254 148L248 154M250 130L243 127L239 128M192 149L189 141M192 149L203 153L208 150L219 153M192 226L191 232L189 237M192 226L201 222L211 220L219 216M215 251L220 248M215 251L192 245M220 248L221 240L222 229L222 220M219 216L222 220M192 245L189 237M161 235L169 234L179 234L189 237M160 212L164 207M185 212L177 211L170 207L164 207M185 212L189 218L192 226M218 203L220 208L219 216M200 191L185 212M212 286L214 276L215 264L215 251M242 278L242 270L240 260L240 252M240 252L220 248M179 268L192 245M250 202L251 211L248 218L247 224M247 224L222 220M248 225L244 250M248 225L273 227M244 250L254 253L263 251L274 253M273 227L271 238L275 244L274 253M247 224L248 225M240 252L244 250M269 200L263 194M273 227L273 227M277 257L274 253M245 668L256 667L262 667L270 668M245 668L246 659L243 650L244 643M244 643L250 641L256 642L264 641M264 641L274 651M270 668L271 659L274 651M236 677L242 683L246 691L253 695M236 677L242 672L245 668M281 685L279 680L272 675L270 668M285 686L304 658M304 658L298 655L296 651L290 646M290 646L280 649L274 651M199 448L192 448M199 448L204 456L211 458L218 466M192 448L176 469M218 466L214 475M214 475L191 483M176 469L191 483M175 428L192 448M217 422L199 448M233 460L225 465L218 466M175 469L176 469M226 500L223 490L216 483L214 475M188 507L187 498L192 493L191 483M240 540L242 548L248 553M226 580L219 579M226 580L234 576L237 574L246 572M246 572L248 553M279 524L278 530L275 541L271 546M248 553L257 552L262 549L271 546M305 547L294 563M305 547L300 536L298 528L294 519M294 563L291 563M271 546L291 563M304 446L297 446L290 443M304 446L308 438L316 429L319 418M290 443L279 419M319 418L309 416L298 412L289 409M289 409L286 414L279 419M314 462L310 455L306 450L304 446M271 460L279 455L283 450L290 443M325 416L319 418M257 421L263 419L272 418L279 419M288 383L289 409M642 461L640 460M628 485L625 482L620 476M620 476L620 469L620 462M620 462L629 462L635 461L640 460M617 417L605 427M617 417L615 403M591 409L595 416L600 423L605 427M591 409L598 405L603 401L607 398M605 427L605 427M607 398L611 402L615 403M586 409L579 432M586 409L591 409M579 432L589 438M589 438L596 433L599 432L605 427M604 385L604 393L607 398M586 409L585 408M633 396L627 397L623 401L615 403M357 763L347 768M357 763L364 765L375 766L383 771M346 768L349 790M346 768L347 768M379 796L371 796L361 798L354 796M379 796L382 786L381 780L383 771M354 796L349 790M365 740L363 748L359 754L357 763M365 740L360 734L358 730L354 723M354 723L338 723M332 737L336 748L341 760L347 768M389 741L386 769M389 741L383 740L371 740L365 740M386 769L383 771M325 799L349 790M316 771L346 768M351 819L353 810L354 805L354 796M381 820L383 812L381 805L382 799M382 799L379 796M402 363L405 331M402 363L371 355M372 340L371 355M372 340L380 334L385 331L393 326M393 326L405 331M407 370L402 363M413 327L405 331M359 368L365 361L371 355M357 327L363 330L366 335L372 340M381 300L384 311L390 316L393 326M523 404L519 408L512 410M523 404L533 408M512 410L510 429M510 429L532 433M535 411L536 418L535 422L535 430M535 430L532 433M501 405L512 410M478 424L479 425M510 429L509 430M479 425L509 430M305 547L314 548L319 549L329 547M294 563L319 584M319 584L324 578L332 570L337 566M337 566L335 560L329 556L329 547M326 516L337 529M329 547L331 540L334 537L337 529M364 513L359 525M337 529L359 525M403 502L429 512M403 502L427 476M429 512L450 493M427 476L450 483M450 483L450 493M400 503L403 502M400 503L402 516L399 530L401 540M434 531L433 524L430 517L429 512M434 531L426 537L417 542L410 544M401 540L405 543L410 544M414 451L418 459L423 468L427 476M390 498L397 498L400 503M546 745L524 732M524 732L523 730M566 720L561 712M523 730L528 723L536 717L540 709M540 709L561 712M579 685L583 690L590 694L596 700M579 685L564 693M564 693L561 712M386 769L408 772M382 799L390 801L401 797L409 799M408 772L409 779L408 788L409 799M462 803L459 796M459 796L453 794L445 791L437 787M437 787L425 801M409 799L411 802M191 650L205 621M191 650L171 644M171 644L168 623M204 619L205 621M204 619L193 619L185 613L175 613M175 613L172 616L168 623M202 592L201 601L202 610L204 619M230 607L230 597L226 590L226 580M208 621L205 621M184 588L179 593L172 598M172 598L174 604L175 613M146 587L172 598M146 587L143 599L142 609L141 619M141 619L148 619L160 621L168 623M192 652L202 654L210 652L217 655M192 652L191 660L191 667M191 667L208 690M217 655L221 664L223 670L228 678M228 678L216 689M216 689L208 690M230 639L224 645L224 652L217 655M191 650L192 652M236 677L228 678M238 639L244 643M232 718L216 689M217 727L200 720M200 720L198 715L199 710L196 701M196 701L203 695L208 690M128 630L130 636L135 642M128 630L133 625L141 619M171 644L165 648M165 648L154 645L145 643L135 642M123 629L128 630M96 668L101 668L108 673L113 676M113 676L118 673L125 665L133 662M135 642L133 662M196 701L188 699L182 701M191 667L169 681M182 701L177 692L175 688L169 681M165 648L156 679M169 681L164 680L156 679M133 662L140 669L148 672L156 679M156 679L156 679M39 774L48 808M47 766L57 766L66 768L75 768M84 782L75 768M84 782L80 792L73 801L66 812M84 782L94 784L100 784L108 786M75 768L80 759L82 750L85 740M118 750L114 746L110 741M108 786L108 785M110 741L101 741L91 742L85 740M48 728L60 730L72 732L80 731M81 702L85 710M85 710L80 731M80 731L85 740M146 778L148 788L151 800L152 813M108 786L110 793L113 800L113 805M85 451L80 464L73 476L69 486M112 486L102 488L88 491L76 494M76 494L72 491L69 486M24 491L32 494L36 495M43 452L50 464L56 474L62 485M36 495L62 485M62 485L69 486M168 556L148 568M126 529L127 538L128 544L128 550M128 550L132 556L140 564L148 568M146 587L145 585M145 585L148 568M104 601L108 594L109 590M145 585L109 590M65 594L69 574M109 590L100 569M69 574L100 569M128 550L100 568M100 569L100 568M262 81L265 97M287 83L291 92M291 92L278 102M278 102L265 97M240 102L255 106M255 106L260 101L265 97M250 130L254 127L260 122M255 106L255 116L260 122M319 73L316 77L316 83M291 92L295 93M316 83L310 89L304 92L295 93M293 200L296 194L296 187L297 182M321 209L324 204M297 182L318 181M318 181L322 188L320 195L324 204M355 217L347 198M324 204L331 201L341 202L347 198M377 206L367 193M377 206L373 213L372 220M367 193L348 195M347 198L348 195M165 196L174 190L180 184L189 179M165 196L159 191L155 183L149 178M149 178L163 163M163 163L168 166L176 165L184 168M184 168L189 179M197 183L189 179M164 207L165 196M146 178L149 178M158 144L163 163M192 149L184 168M801 190L794 195L783 199L776 201M801 227L799 227M799 227L778 212M776 201L775 204L778 212M796 165L800 174L801 181L801 190M751 168L744 172L735 173L728 178M751 168L765 182M752 200L727 187M752 200L765 195M728 178L726 184M765 182L765 190L765 195M726 184L727 187M753 151L751 168M725 154L729 160L725 172L728 178M783 162L777 170L772 174L765 182M704 179L712 180L718 185L726 184M776 201L765 195M718 210L722 215L727 220M718 210L727 187M752 200L751 206L748 212L747 219M747 219L739 220L734 220L727 220M701 236L703 230L707 221L708 212M701 236L694 235L686 235M686 235L682 230M682 230L679 218M679 218L683 212L689 209L695 206M695 206L708 212M665 238L682 230M682 250L686 235M661 209L669 211L672 215L679 218M661 209L661 209M664 189L674 182M664 189L665 197L663 204L661 209M691 187L693 192L696 201L695 206M718 210L712 212L708 212M703 257L705 255M701 236L702 237M705 255L702 250L703 243L702 237M727 220L724 236M702 237L724 236M812 284L805 286L796 288M794 290L794 293L796 300M794 290L796 288M796 300L809 311M813 355L805 353L798 353M798 353L796 344M796 344L802 338L804 333M796 300L790 306L786 314L781 317M781 317L781 318M781 318L802 324M798 353L797 354M797 354L798 359L798 366L801 375M791 391L790 382M790 382L796 379L801 375M766 393L756 402M766 393L767 388L767 380M748 399L749 393L747 383L748 376M748 399L756 402M748 376L752 370L757 368M757 368L767 380M783 396L766 393M790 382L788 379L783 376M767 380L774 380L783 376M797 354L781 361M783 376L783 368L781 361M796 344L790 339L785 336L776 334M781 361L775 359L771 357M771 357L776 334M781 318L779 324L776 334M776 334L776 334M798 259L801 263L810 264L814 266M798 259L810 237M792 263L794 260M792 263L794 273L796 280L796 288M794 260L798 259M782 240L786 235L795 231L799 227M782 240L794 260M576 8L569 9L563 7M576 8L580 1L582 -2L583 -9M563 7L555 -10M582 18L580 13L576 8M553 30L551 24M551 24L563 7M538 -1L528 0L522 4L515 8M538 -1L541 8L541 14L545 20M545 20L525 22M525 22L515 12M515 8L515 12M507 -4L515 8M551 24L545 20M523 42L525 22M495 31L502 25L507 21L515 12M631 191L613 184M631 191L643 180M613 184L620 161M643 180L642 174L640 165M640 165L631 161L624 159M624 159L620 161M605 188L607 185L613 184M632 210L634 203L631 197L631 191M664 189L643 180M600 155L607 155L612 157L620 161M652 154L647 160L640 165M625 140L626 147L623 155L624 159M749 278L748 281M749 278L757 270M748 281L771 291M757 270L773 270M773 270L775 288M775 288L771 291M792 263L777 266M794 290L787 288L783 289L775 288M777 266L773 270M767 306L771 300L771 291M767 306L781 317M719 300L720 300M722 274L725 281L730 288M722 274L712 276L705 279M730 288L720 300M709 329L712 329M712 329L718 324L724 319L732 314M720 300L732 314M545 391L544 384M559 375L553 377L547 378M544 384L547 378M546 303L544 313M573 315L555 319M555 319L549 314L544 313M525 311L543 313M544 313L543 313M519 325L527 329L534 336M543 313L541 321L538 328L534 336M756 402L758 407M781 413L776 416L771 417M758 407L763 412L771 417M797 419L798 424M798 424L786 435M771 417L771 424L770 431M786 435L770 431M798 424L801 427L805 431M803 450L788 446M788 446L786 435M803 450L800 457L800 464M812 472L804 469L800 464M796 510L797 504L798 498L799 489M799 489L808 487M714 419L717 400M714 419L723 422L729 426M734 423L729 426M734 423L734 401M717 400L727 397M727 397L734 401M703 395L709 400L717 400M710 421L714 419M726 437L729 432L729 426M748 399L734 401M758 407L754 416L749 422L746 427M746 427L734 423M728 376L727 384L725 390L727 397M728 376L724 374L717 372M728 376L728 376M728 376L733 375L741 374L748 376M719 654L727 677M719 654L711 653L707 654M707 654L702 659L698 663L695 668M727 677L717 680L712 686L702 687M695 668L696 676L698 682L701 687M702 687L701 687M738 682L734 681L727 677M732 641L719 654M725 628L705 620M705 620L693 633M693 633L707 654M713 707L711 700L705 694L702 687M661 676L672 661M682 697L691 694L695 691L701 687M672 661L681 663L688 666L695 668M579 685L578 676L580 669M616 668L612 667L606 663M580 669L590 669L598 665L606 663M672 661L673 655L671 648M693 633L687 633M671 648L678 643L681 637L687 633M624 540L632 541L637 542M624 540L620 542L616 547M616 547L626 563M637 542L641 551L641 559M626 563L641 559M648 524L647 535M634 514L623 523M623 523L624 540M647 535L642 537L637 542M701 536L699 537M682 518L685 523L688 531L690 534M699 537L694 535L690 534M293 600L287 606L283 610L277 617M293 600L278 580M259 583L265 582L273 579L278 580M259 583L257 593L260 601L258 609M258 609L271 618M271 618L277 617M304 601L298 599L293 600M304 601L306 610L307 619L310 625M310 625L293 632M293 632L287 627L282 624L277 617M318 590L319 584M318 590L314 592L307 599L304 601M291 563L285 568L282 576L278 580M246 572L259 583M244 614L253 612L258 609M264 641L268 633L268 626L271 618M290 646L294 641L293 632M327 709L327 701M354 723L372 703M372 703L368 699L366 693L361 687M361 687L350 685M350 685L344 691L335 695L327 701M285 687L318 689M318 689L322 697L327 701M633 434L638 438L642 440M633 434L631 430L631 423M650 438L642 440M650 438L656 432L657 423M657 423L652 419L651 416M651 416L646 418L638 417M638 417L635 419L631 423M617 444L633 434M617 444L617 450L614 455M614 455L620 462M640 460L642 440M617 444L612 438L609 432L605 427M617 417L631 423M665 449L658 447L653 440L650 438M667 423L663 423L657 423M655 401L652 409L651 416M633 396L638 417M387 636L385 623M387 636L393 642M401 609L397 612L389 620L385 623M401 609L420 615M420 615L418 622L420 632L418 639M393 642L401 640L410 638L418 639M387 636L380 640L367 644L360 651M360 651L365 655L368 662L370 667M370 667L376 667L386 667L391 667M391 667L394 665M393 642L394 665M500 614L507 619L510 622L515 625M500 614L509 596M521 603L516 601L509 595M521 603L519 621M519 621L515 625M509 596L509 595M483 618L490 615L500 614M483 618L483 610L477 604L475 595M475 595L476 594M476 594L486 597L497 597L509 596M483 618L481 625M513 639L513 634L515 625M513 639L503 644M481 625L490 633L495 636L503 644M561 422L557 426L552 432M561 422L578 432M552 432L554 439L558 446M578 432L566 446M566 446L558 446M560 413L561 422M535 430L545 432L552 432M579 432L578 432M532 433L534 443L532 448M532 448L551 454M551 454L558 446M624 497L603 502M620 476L600 485M600 485L599 493L603 502M360 651L352 648M385 623L381 622L374 617M352 648L352 639L352 631L354 622M374 617L366 619L362 620L354 622M318 590L326 594L334 603L339 608M310 625L315 627L321 631M321 631L325 626L334 616L340 611M339 608L340 611M337 566L344 566L351 569M339 608L357 590M351 569L355 576L355 584L357 590M374 617L371 596M354 622L340 611M357 590L366 593L371 596M396 584L392 582M396 584L401 609M371 596L392 582M540 709L535 693M564 693L545 680M535 693L539 688L545 680M541 772L532 773L525 769L518 770M523 810L508 785M518 770L512 777L508 785M524 732L509 756M518 770L509 756M484 803L485 799L488 790L492 785M508 785L492 785M408 772L422 763M437 787L435 780L435 773M422 763L435 773M523 730L507 719M511 692L535 693M511 692L506 694L505 701M507 719L505 701M181 781L189 777L197 774L203 769M181 781L184 801M196 808L201 802L208 800L214 796M203 769L207 773L214 784L216 788M216 788L215 793L214 796M149 775L156 771L165 768M165 768L168 773L175 775L181 781M237 813L229 808L220 803L214 796M213 753L207 755M236 777L231 783L223 786L216 788M207 755L203 769M207 755L200 749L190 749L185 743M165 768L168 763L168 756M168 756L185 743M132 750L135 745L143 739L147 733M168 756L159 750L156 739L147 733M200 720L193 725L190 732L184 735M182 701L176 706L170 714L167 718M167 718L173 724L176 729L184 735M184 735L185 743M26 588L29 580L28 576M69 574L58 560M58 560L46 565L37 571L28 576M2 521L27 535M36 495L40 507L42 520L42 531M42 531L27 535M-9 557L18 559M27 535L24 543L21 552L18 559M18 559L28 576M77 503L69 514L59 524L51 534M77 503L84 509L88 518L96 527M96 527L91 534L88 540M88 540L77 540L69 545L58 544M51 534L54 540L58 544M76 494L77 503M42 531L51 534M117 524L96 527M100 568L88 540M58 560L58 544M445 101L441 113M410 101L410 105M410 105L414 110M414 110L425 112L430 114L441 113M469 124L462 124L453 124L445 127M441 113L445 127M453 154L448 147L449 139L444 129M444 129L445 127M435 162L418 154M444 129L437 130L427 136L420 138M418 154L420 138M414 110L410 129M420 138L410 129M318 181L324 176L327 167M348 195L349 186L347 177L344 170M344 170L334 169L327 167M389 82L377 98M410 105L389 110M389 110L377 98M278 102L279 115M260 122L269 124M269 124L279 115M316 83L325 105M295 93L301 101L302 109L307 115M307 115L312 113L320 108L325 105M302 124L279 115M302 124L304 123M307 115L304 123M778 212L767 230M747 219L750 224M750 224L767 230M782 240L777 242L770 240M767 230L768 235L770 240M777 266L773 260L769 251L766 246M757 270L757 263L755 258L754 252M754 252L758 250L766 246M770 240L766 246M727 240L725 248L724 257M727 240L736 242L743 241M749 250L746 246L743 241M749 250L742 254L738 257L733 263M724 257L728 263M728 263L733 263M705 255L724 257M724 236L727 240M750 224L745 232L743 241M754 252L749 250M749 278L733 263M722 274L728 263M748 281L744 287M744 287L739 289L730 288M752 340L753 348L757 354L759 361M752 340L742 340L737 340M735 356L744 359L748 361L757 365M735 356L734 352L731 347M757 365L759 361M737 340L732 344M731 347L732 344M771 357L759 361M758 333L757 334L752 340M758 333L776 334M728 376L730 370L732 361L735 356M757 368L757 365M711 356L717 353L724 349L731 347M712 329L732 344M746 298L743 305L736 310L734 314M746 298L764 307M754 320L736 316M754 320L759 314L764 307M736 316L734 314M744 287L746 294L746 298M732 314L734 314M767 306L764 307M758 333L758 328L754 320M737 340L737 333L737 325L736 316M523 404L522 399L519 393L520 385M494 386L501 382L505 381M520 385L505 381M544 384L538 384L533 383L525 381M520 385L525 381M572 344L566 343L562 344M555 319L555 337M562 344L560 338L555 337M562 370L560 363L556 353M562 344L556 353M534 336L534 338M555 337L534 338M736 448L743 446M746 427L749 431M743 446L749 431M770 431L767 435M749 431L753 432L762 434L767 435M773 496L775 493M799 489L791 484M775 493L782 489L787 487L791 484M800 464L795 468L788 469M791 484L788 469M599 588L610 595M599 588L598 574M598 574L603 568M603 568L622 575M622 575L625 583M625 583L621 588L616 595M610 595L616 595M572 580L572 584M572 580L576 577L582 571M572 584L584 594M584 594L599 588M582 571L598 574M614 547L608 554L603 558M614 547L616 547M603 558L603 568M626 563L625 569L622 575M572 580L567 574L560 571M572 584L569 586L565 592L559 597M560 571L554 575L550 579L543 580M543 580L540 586M540 586L542 594M559 597L549 598L542 594M584 594L584 612M584 612L563 607M559 597L563 607M540 586L532 584L526 582L518 578M518 578L512 582M512 582L509 595M521 603L528 600L538 600M538 600L542 594M519 621L541 621M538 600L541 621M584 612L586 615M610 595L596 615M596 615L593 615L586 615M624 607L620 602L616 595M624 607L612 627M596 615L612 627M630 661L637 641M637 641L612 628M606 663L602 657L601 648L600 643M600 643L612 628M703 562L702 571M703 562L722 557M702 571L713 583M713 583L718 580L723 577L728 572M728 572L728 564L725 559M722 557L725 559M716 538L722 557M697 555L699 537M697 555L698 556L703 562M744 549L739 552L730 554L725 559M738 578L731 574L728 572M691 600L692 596M691 600L694 606L702 614L705 620M692 596L700 594L704 591L712 588M705 620L720 599M720 599L718 594L712 588M705 620L705 620M724 599L720 599M713 583L712 588M702 571L683 581M692 596L687 591L683 582M683 582L683 581M637 641L639 640M624 607L629 608L634 610M612 627L612 628M634 610L639 640M671 648L652 637M639 640L644 638L652 637M339 667L331 667L323 671M339 667L346 650M346 650L340 645L329 643L323 638M323 638L317 647L312 653L309 657M309 657L315 662L317 667L323 671M350 685L345 680L343 672L339 667M318 689L318 683L320 676L323 671M370 667L365 676L362 681L361 687M352 648L346 650M321 631L323 638M304 658L309 657M394 665L401 666L410 666L419 668M418 639L421 642M421 642L419 668M465 515L463 523M465 515L450 493M434 531L441 534M441 534L449 531L458 526L463 523M494 571L485 572M494 571L498 566L499 559L505 552M485 572L471 555M505 552L495 550L486 547L479 542M471 555L475 550L476 543M479 542L476 543M512 582L494 571M476 594L478 586L482 579L485 572M508 676L511 692M508 676L530 663M545 680L545 674M545 674L539 671L534 668L530 663M513 639L529 648M503 644L499 652L497 658L494 664M494 664L498 667L501 672L508 676M529 648L530 663M452 628L443 643M452 628L471 632M471 632L470 639L474 648L472 659M443 643L447 650L449 658M472 659L449 658M420 615L423 614M423 614L432 616L440 616L448 620M448 620L449 625L452 628M421 642L429 643L437 644L443 643M475 595L465 595L458 594M481 625L471 632M448 620L452 611L455 603L458 594M494 664L488 666L480 666M480 666L477 661L472 659M419 668L427 677M437 677L433 678L427 677M437 677L440 673L445 663L449 658M509 430L509 437L507 443M532 448L531 450M507 443L510 447L515 453M531 450L523 453L515 453M531 450L532 474M511 462L513 457L515 453M511 462L521 475M532 474L526 474L521 475M551 454L553 464M532 474L535 476M553 464L547 468L543 474L535 476M538 489L539 484M538 489L533 493L530 498L523 500M521 475L515 482L511 487M523 500L519 498L511 491M511 487L511 491M539 484L537 481L535 476M495 476L480 480M495 476L500 464M500 464L491 451M480 480L476 476L467 476L463 471M463 471L464 463M464 463L478 447M478 447L484 450L491 451M511 462L504 461L500 464M511 487L495 476M507 443L499 448L491 451M444 442L448 450L458 455L464 463M450 483L458 478L463 471M479 425L478 447M504 532L516 521M504 532L493 529M516 521L508 517L504 510L495 506M493 529L488 508M495 506L489 507M489 507L488 508M507 551L507 545L504 538L504 532M507 551L505 552M479 542L483 539L488 532L493 529M523 500L523 506L526 515M511 491L504 498L502 501L495 506M520 521L526 515M520 521L516 521M465 515L488 508M463 523L468 529L474 535L476 543M480 480L489 507M623 523L609 518M603 502L601 505M609 518L601 505M614 547L608 541L604 537L599 534M609 518L608 523L601 528L599 534M614 455L608 457L599 457M600 485L591 477M591 477L596 470L599 462L599 457M589 438L590 446L591 450M566 446L571 453L574 457M591 450L584 451L578 453L574 457M591 450L599 457M384 568L377 565L371 563L362 562M384 568L398 542M362 562L365 533M398 542L388 539L375 537L365 533M351 569L358 565L362 562M392 582L384 568M359 525L361 529L365 533M401 540L398 542M467 774L484 774M467 774L461 771L458 765M458 765L460 743M484 774L487 768L490 763L491 755M491 755L490 750L483 742L480 739M480 739L473 739L466 742L460 743M459 796L462 790L464 782L467 774M492 785L488 781L484 774M435 773L458 765M509 756L505 754L499 754L491 755M484 731L492 728L498 722L507 719M484 731L480 739M391 667L392 691M427 677L417 692M417 692L409 692L399 692L392 691M372 703L381 704M381 704L392 691M445 734L422 752M445 734L443 727L443 719M443 719L421 713M421 713L399 727M422 752L415 748L408 737L399 732M399 732L399 727M422 763L422 752M460 743L445 734M417 692L421 713M381 704L389 711L392 720L399 727M389 741L399 732M445 685L444 696L446 706L446 715M445 685L455 685L463 685L472 684M446 715L453 713L462 710L471 708M471 708L472 703L477 696M472 684L476 691L477 696M437 677L445 685M443 719L446 715M480 666L472 684M484 731L478 723L476 715L471 708M505 701L497 699L485 699L477 696M148 728L160 718M148 728L139 723L129 720L123 714M160 718L159 708L151 698L149 691M149 691L121 700M123 714L122 711L119 705M121 700L119 705M167 718L160 718M147 733L148 728M110 741L114 731L117 723L123 714M156 679L153 687L149 691M113 676L121 700M85 710L98 708L106 705L119 705M433 185L412 179M418 154L405 162M405 162L412 179M403 203L400 198M412 179L409 188L404 191L400 198M377 206L385 202L389 201L396 197M396 197L400 198M276 138L283 138L290 140M276 138L267 150M290 140L295 158M267 150L277 170M295 158L287 169M277 170L281 168L287 169M302 124L299 130L294 136L290 140M269 124L273 129L276 138M254 148L267 150M320 155L323 141M320 155L295 158M304 123L311 130L317 136L323 141M263 181L277 170M297 182L290 176L287 169M327 167L320 155M323 141L330 138L336 132L344 130M325 105L338 107M344 130L341 121L340 115L338 107M360 78L368 98M377 98L371 99M368 98L371 99M341 79L341 103M368 98L341 103M341 103L338 107M547 378L545 373L540 364M525 381L524 372L526 367M526 367L534 367L540 364M556 353L550 357L542 357M534 338L533 343M533 343L542 357M540 364L542 357M767 451L760 457M767 451L773 451L780 454M759 463L763 473M759 463L760 457M763 473L767 474M767 474L773 474L782 472L786 468M780 454L786 468M743 446L760 457M767 435L766 444L767 451M788 446L786 448L780 454M750 488L756 483L758 477L763 473M735 471L744 467L750 466L759 463M775 493L773 489L771 482L767 474M788 469L786 468M582 625L585 639M582 625L553 629M585 639L580 646L572 652L567 656M550 635L555 641L561 648L566 656M550 635L550 631M567 656L566 656M553 629L550 631M586 615L582 625M600 643L593 643L585 639M563 607L558 616L558 621L553 629M580 669L574 664L570 661L567 656M545 674L550 670L560 662L566 656M529 648L550 635M541 621L546 628L550 631M679 558L678 552L673 544M679 558L676 565M676 565L669 564L658 565L652 568M659 544L657 550L653 558L651 565M659 544L670 542M651 565L652 568M670 542L673 544M697 555L690 557L683 556L679 558M690 534L673 544M683 581L679 572L676 565M647 535L654 541L659 544M641 559L647 561L651 565M669 522L670 542M632 583L625 583M632 583L639 579L645 572L652 569M652 569L652 568M647 599L644 605M647 599L661 591M644 605L657 621M661 591L661 591M661 591L666 597L670 604L672 611M657 621L671 612M672 611L671 612M632 583L647 599M634 610L644 605M652 569L661 591M652 637L654 627L657 621M683 582L676 586L668 590L661 591M691 600L672 611M687 633L681 624L675 621L671 612M455 591L447 589L438 590L430 590M455 591L452 561M448 558L452 561M448 558L440 562L431 563L422 567M430 590L425 584L421 583L419 576M419 576L422 572L422 567M423 614L430 590M458 594L455 591M471 555L452 561M441 534L448 558M410 544L414 550L420 560L422 567M396 584L402 581L411 580L419 576M527 540L536 539L544 537M527 540L520 553M523 557L520 553M523 557L537 561M544 537L546 544L547 555M537 561L540 560L547 555M507 551L514 554L520 553M520 521L520 526L526 534L527 540M518 578L519 573L523 563L523 557M543 580L537 561M560 571L561 563L559 558M559 558L547 555M405 162L402 161M396 197L383 178M402 161L397 166L388 172L383 178M367 193L371 187L371 182L375 176M375 176L383 178M524 347L522 352L520 362M524 347L507 341M520 362L516 361L509 364M509 364L502 357L498 353M507 341L498 353M526 367L520 362M533 343L527 346L524 347M507 329L507 341M505 381L508 373L509 364M484 355L492 352L498 353M584 478L579 471L575 471L572 464M584 478L580 481M580 481L560 485M572 464L559 468M559 468L561 475L560 484M560 484L560 485M591 477L584 478M574 457L572 464M553 464L559 468M539 484L545 484L554 485L560 484M550 530L541 527L537 519L532 515M550 530L555 529M555 529L555 522L556 513L554 505M532 515L537 511L544 507L547 504M547 504L554 505M526 515L532 515M544 537L550 530M538 489L541 495L547 504M561 501L554 505M561 501L560 485M579 503L573 506M579 503L593 508M573 506L571 520M593 508L590 513L588 522L585 530M585 530L578 525L571 520M561 501L566 502L573 506M580 481L579 503M601 505L593 508M555 529L562 524L571 520M555 529L555 529M599 534L587 535M587 535L585 530M586 536L565 541M586 536L585 544L587 552M582 557L587 552M582 557L575 555L564 554M564 554L564 546L565 541M587 535L586 536M555 529L565 541M603 558L593 554L587 552M582 571L583 562L582 557M559 558L564 554M410 129L405 131L396 130L391 133M402 161L390 148M390 148L391 133M389 110L388 131M391 133L388 131M371 99L364 128M388 131L379 130L374 129L364 128M344 130L355 135M355 135L358 130L364 128M356 140L361 143L370 148L373 154M356 140L354 151L347 161L344 170M373 154L370 171M344 170L370 171M390 148L373 154M355 135L356 140M344 170L344 170M375 176L370 171" stroke="#616666"/>
<path d="M137.7 691.0L141.0 689.0L145.0 690.0L148.0 694.0L148.8 700.0L146.0 705.0L142.0 708.0L138.0 706.0L139.0 701.0L136.0 697.0Z" fill="#2b4a6b"/>
<path d="M117.0 647.0L122.0 645.0L128.0 646.0L131.0 651.0L130.0 657.0L125.0 661.0L119.0 660.0L115.0 655.0Z" fill="#2b4a6b"/>
<path d="M36.0 674.0L40.0 675.0L44.0 680.0L45.0 684.0L41.0 683.0L37.0 679.0Z" fill="#2b4a6b"/>
<path d="M53.0 679.0L56.0 684.0L58.0 690.0L62.0 694.0L68.0 697.0L74.0 698.0L78.0 702.0L74.0 704.0L67.0 702.0L60.0 699.0L55.0 693.0L52.0 686.0Z" fill="#2b4a6b"/>
<path d="M778.4 723.5L782.0 727.0L786.0 733.0L789.0 739.0L789.7 744.4L787.0 748.0L784.0 748.0L781.9 742.7L779.2 737.4L778.0 730.0Z" fill="#2b4a6b"/>
<path d="M762.6 786.0L765.0 783.5L770.0 782.5L773.0 784.0L773.0 786.0Z" fill="#2b4a6b"/>
<path d="M293.6 53.0L296.0 50.0L301.0 48.6L305.5 49.8L308.0 52.5L309.5 58.0L311.0 62.5L313.0 64.5L316.5 66.0L315.0 69.5L313.8 74.0L315.5 80.2L317.0 84.0L318.0 89.3L315.5 88.0L312.5 82.0L310.0 75.0L308.0 68.0L305.0 62.0L302.5 56.0L300.0 53.5L297.0 54.0L294.5 55.5Z" fill="#2b4a6b"/>
<path d="M362.0 252.0L366.0 253.5L371.0 256.0L376.0 260.0L381.0 264.0L385.0 268.0L390.0 271.0L389.0 273.0L383.0 270.0L378.0 266.0L372.0 262.0L366.0 258.0L361.0 254.0Z" fill="#2b4a6b"/>
<path d="M607.5 280.0L609.0 285.0L611.5 280.5L613.0 285.5L616.0 282.0L617.0 287.0L621.5 286.5L618.0 291.5L614.0 295.0L610.5 298.0L607.0 303.0L603.0 306.5L600.0 303.0L598.5 300.0L602.0 299.0L604.5 294.0L606.0 289.0L606.5 284.0Z" fill="#2b4a6b"/>
<path d="M432.0 371.0L435.0 368.0L438.0 364.0L441.0 360.0L444.0 359.0L445.0 361.0L442.0 365.0L440.0 369.0L437.0 373.0L434.0 375.0Z" fill="#2b4a6b"/>
<path d="M418.0 408.0L420.0 408.0L421.5 414.0L423.0 420.0L425.0 425.0L426.0 429.0L424.0 429.0L422.0 426.0L420.0 421.0L418.5 415.0Z" fill="#2b4a6b"/>
<path d="M520.0 496.0L522.0 497.0L523.0 503.0L525.0 508.0L527.0 513.0L528.0 518.0L530.0 521.0L527.0 525.0L525.0 531.0L523.0 529.0L521.0 522.0L520.0 514.0L519.0 506.0Z" fill="#2b4a6b"/>
<path d="M535.0 598.0L537.0 597.0L538.0 604.0L542.0 607.0L546.0 605.0L549.0 599.0L551.0 598.0L551.0 603.0L557.0 605.0L556.0 608.0L550.0 609.0L544.0 612.0L539.0 613.0L535.0 610.0Z" fill="#2b4a6b"/>
<path d="M0.0 698.0L1.7 698.3L5.0 697.7L7.8 696.0L9.3 695.1L12.5 692.7L16.5 692.5L19.0 692.2L21.5 692.5L24.0 694.0L21.7 698.3L22.8 699.3L26.3 701.0L29.1 699.8L32.2 700.0L33.4 699.3L37.8 700.8L39.2 700.0L42.4 698.6L39.8 702.0L40.2 704.8L37.7 706.7L38.3 709.7L40.9 709.9L43.5 712.0L46.0 715.0L46.3 718.6L48.0 719.2L50.5 719.2L54.0 718.0L56.4 719.7L59.0 721.2L61.4 720.8L64.5 720.4L65.2 721.6L67.5 725.0L70.0 728.6L71.2 731.3L70.6 735.2L66.4 733.7L65.3 734.9L63.9 738.4L61.0 739.3L63.6 741.9L65.0 743.3L67.7 744.6L70.0 744.8L71.7 742.1L75.3 739.6L78.1 736.7L79.3 735.2L83.2 736.9L85.0 736.7L87.5 737.8L90.4 739.6L92.7 741.2L95.2 743.3L98.9 743.8L100.2 744.8L98.3 749.4L100.4 749.8L104.8 752.2L106.6 750.3L107.3 746.0L108.5 743.0L111.4 742.2L114.0 740.2L115.8 738.6L119.1 736.8L121.4 734.6L123.4 734.3L127.0 735.6L128.9 739.4L131.6 741.1L133.9 740.9L137.0 740.2L138.9 741.5L141.7 744.8L140.0 749.4L141.0 752.0L144.0 753.0L147.7 752.7L150.0 753.0L151.4 749.9L152.0 746.0L151.3 744.8L148.4 742.5L147.0 739.0L149.1 735.7L149.0 732.0L148.3 729.3L145.4 726.1L144.0 724.0L145.6 720.5L144.3 719.4L146.0 716.0L148.7 713.0L150.0 710.0L152.5 712.0L155.3 713.3L156.0 716.3L158.6 719.2L160.9 719.6L162.5 721.3L166.0 722.9L170.1 725.9L172.2 726.6L174.4 728.6L174.9 731.8L177.1 732.8L179.2 735.0L180.0 735.4L183.2 737.7L186.5 740.0L189.0 741.2L190.6 742.6L192.9 744.5L196.4 745.5L198.0 747.6L201.2 748.9L204.2 751.3L206.0 753.0L206.6 755.3L206.0 760.0L235.0 760.0L235.4 758.2L233.8 754.4L234.9 751.3L233.4 750.3L231.3 747.6L228.4 745.8L225.1 745.1L223.6 743.1L222.6 738.9L220.2 735.3L218.1 735.0L214.0 736.5L211.2 733.1L210.3 731.6L206.7 732.7L205.4 734.0L202.1 733.7L200.5 731.6L198.4 729.5L195.6 729.1L193.2 730.5L190.6 732.8L188.1 730.3L185.7 729.1L181.8 726.2L179.6 724.8L181.7 724.7L184.6 722.4L186.9 722.9L183.2 720.5L182.5 718.9L180.8 715.6L179.0 714.1L175.9 711.2L177.8 710.2L182.0 709.4L180.4 707.6L180.8 704.5L182.5 703.8L185.7 702.0L185.7 699.4L186.9 695.9L189.6 694.8L193.1 695.9L194.1 692.9L195.6 690.9L200.2 689.8L202.9 689.7L202.1 687.4L202.4 683.8L200.5 682.3L200.3 679.5L200.1 677.9L198.6 674.5L198.6 671.2L196.8 675.5L193.1 678.6L192.5 681.2L190.8 684.3L191.2 686.0L190.2 687.2L186.9 689.1L184.0 689.7L182.0 687.9L179.9 684.7L179.6 683.5L175.5 683.7L173.4 682.3L172.8 679.7L170.9 677.4L174.6 674.3L178.0 672.8L180.8 673.7L183.6 671.1L185.7 668.8L187.6 665.4L189.4 662.6L191.9 660.8L194.7 660.4L198.0 661.4L199.4 660.0L202.9 658.9L203.5 656.9L205.4 654.0L208.3 652.8L209.7 650.6L208.0 646.0L210.6 644.9L213.4 645.0L214.9 646.9L217.0 648.8L219.6 649.0L220.7 646.9L224.0 646.5L226.3 645.0L230.0 644.2L232.1 642.6L234.6 640.5L238.0 641.6L241.1 641.4L243.0 642.2L246.6 641.4L248.8 643.2L252.3 645.6L254.0 646.0L257.6 643.9L258.5 643.7L261.4 643.2L263.9 643.2L267.0 645.0L270.2 645.0L272.7 648.1L276.2 648.0L279.5 647.4L281.7 647.0L283.9 648.7L288.4 647.5L291.0 648.8L292.4 651.9L295.1 653.7L296.5 657.0L299.8 655.2L301.0 654.3L299.6 652.0L299.3 648.0L299.0 645.6L299.7 642.6L301.0 639.5L300.3 636.4L301.7 633.8L300.5 631.0L300.6 628.8L300.6 625.2L301.4 623.5L302.5 620.2L304.2 618.0L307.0 616.2L309.5 619.2L313.4 620.0L312.5 623.5L314.9 626.0L312.9 628.3L314.3 631.0L314.1 634.3L316.6 636.5L317.0 640.2L318.2 643.1L321.7 645.7L322.9 647.1L325.9 650.3L328.2 651.2L329.0 654.5L331.5 652.8L335.3 653.6L337.5 650.9L340.2 651.2L341.9 650.4L345.3 649.3L348.3 650.2L351.1 649.7L351.4 648.4L355.0 647.6L356.6 648.0L360.8 647.1L362.1 644.9L366.2 645.6L368.0 644.8L371.2 644.2L374.6 643.3L376.2 642.8L379.2 642.9L382.6 642.0L386.5 640.8L387.5 641.7L391.9 640.7L393.9 640.2L397.4 641.1L399.2 641.2L403.8 641.7L405.5 640.4L410.3 641.6L412.2 641.6L414.6 642.3L418.0 642.1L419.1 643.0L422.1 641.3L425.1 642.7L428.4 642.0L430.7 643.0L433.7 643.8L434.8 645.4L438.8 646.3L440.9 645.4L443.6 647.8L445.4 647.6L448.3 649.7L452.1 649.6L454.8 652.1L456.5 652.2L460.0 652.4L461.7 655.2L465.1 656.9L467.6 657.7L470.2 658.3L473.1 660.7L475.2 661.4L477.7 663.7L478.7 665.0L481.5 667.6L483.9 668.7L484.1 670.8L487.2 673.0L488.7 675.3L492.5 677.1L494.0 679.7L496.1 679.5L499.9 681.6L501.7 683.8L503.8 685.6L504.3 688.0L506.4 688.6L508.8 691.5L510.3 695.0L509.7 698.4L510.4 701.1L509.3 703.8L513.0 705.5L516.6 705.3L519.1 703.9L523.5 703.8L528.0 702.5L530.5 701.7L533.4 700.3L536.0 697.5L537.3 695.9L540.4 695.8L542.2 694.4L542.5 696.5L540.3 699.4L541.5 701.5L545.2 699.4L548.5 697.1L551.1 695.9L555.0 693.0L557.8 691.0L560.9 689.5L563.8 687.0L566.8 685.6L569.8 684.0L572.7 682.6L575.0 684.5L576.7 686.3L580.6 686.6L581.6 682.6L580.0 678.5L577.7 674.7L580.6 671.8L584.0 669.8L587.0 669.4L591.6 667.6L595.0 669.2L598.0 669.4L601.4 669.7L604.8 668.5L606.4 668.5L608.4 669.6L611.0 673.0L614.1 675.1L616.5 676.8L619.8 678.6L622.7 678.0L624.3 679.1L627.9 682.2L629.7 683.2L631.4 684.5L632.9 688.6L635.0 690.2L636.2 693.0L637.1 696.4L638.5 699.0L641.1 701.2L644.0 703.1L645.5 704.2L647.8 705.4L650.7 707.7L651.7 711.3L652.3 712.8L651.6 716.5L653.7 720.0L654.2 721.7L655.5 723.0L659.2 724.4L661.2 727.0L663.8 728.8L665.2 731.2L666.5 734.0L667.6 735.9L670.0 739.2L672.6 742.3L675.2 744.4L674.9 748.3L676.0 751.4L674.8 754.4L674.3 756.7L678.0 755.0L678.9 752.1L680.4 750.6L683.0 749.5L687.4 750.6L691.0 750.8L693.6 751.4L694.0 755.0L696.2 756.7L697.5 758.2L698.0 762.0L699.8 765.7L700.6 769.0L702.7 771.6L705.0 774.2L708.4 777.7L707.6 781.2L705.6 780.0L701.4 779.4L700.9 782.8L699.7 785.5L699.2 788.0L700.0 791.6L699.2 794.2L698.5 797.8L699.0 800.0L699.0 800.0L800.0 800.0L800.0 806.0L-6.0 806.0L-6.0 698.0Z" fill="#004164"/>
<path d="M0.0 698.0L1.7 698.3L5.0 697.7L7.8 696.0L9.3 695.1L12.5 692.7L16.5 692.5L19.0 692.2L21.5 692.5L24.0 694.0L21.7 698.3L22.8 699.3L26.3 701.0L29.1 699.8L32.2 700.0L33.4 699.3L37.8 700.8L39.2 700.0L42.4 698.6L39.8 702.0L40.2 704.8L37.7 706.7L38.3 709.7L40.9 709.9L43.5 712.0L46.0 715.0L46.3 718.6L48.0 719.2L50.5 719.2L54.0 718.0L56.4 719.7L59.0 721.2L61.4 720.8L64.5 720.4L65.2 721.6L67.5 725.0L70.0 728.6L71.2 731.3L70.6 735.2L66.4 733.7L65.3 734.9L63.9 738.4L61.0 739.3L63.6 741.9L65.0 743.3L67.7 744.6L70.0 744.8L71.7 742.1L75.3 739.6L78.1 736.7L79.3 735.2L83.2 736.9L85.0 736.7L87.5 737.8L90.4 739.6L92.7 741.2L95.2 743.3L98.9 743.8L100.2 744.8L98.3 749.4L100.4 749.8L104.8 752.2L106.6 750.3L107.3 746.0L108.5 743.0L111.4 742.2L114.0 740.2L115.8 738.6L119.1 736.8L121.4 734.6L123.4 734.3L127.0 735.6L128.9 739.4L131.6 741.1L133.9 740.9L137.0 740.2L138.9 741.5L141.7 744.8L140.0 749.4L141.0 752.0L144.0 753.0L147.7 752.7L150.0 753.0L151.4 749.9L152.0 746.0L151.3 744.8L148.4 742.5L147.0 739.0L149.1 735.7L149.0 732.0L148.3 729.3L145.4 726.1L144.0 724.0L145.6 720.5L144.3 719.4L146.0 716.0L148.7 713.0L150.0 710.0L152.5 712.0L155.3 713.3L156.0 716.3L158.6 719.2L160.9 719.6L162.5 721.3L166.0 722.9L170.1 725.9L172.2 726.6L174.4 728.6L174.9 731.8L177.1 732.8L179.2 735.0L180.0 735.4L183.2 737.7L186.5 740.0L189.0 741.2L190.6 742.6L192.9 744.5L196.4 745.5L198.0 747.6L201.2 748.9L204.2 751.3L206.0 753.0L206.6 755.3L206.0 760.0L235.0 760.0L235.4 758.2L233.8 754.4L234.9 751.3L233.4 750.3L231.3 747.6L228.4 745.8L225.1 745.1L223.6 743.1L222.6 738.9L220.2 735.3L218.1 735.0L214.0 736.5L211.2 733.1L210.3 731.6L206.7 732.7L205.4 734.0L202.1 733.7L200.5 731.6L198.4 729.5L195.6 729.1L193.2 730.5L190.6 732.8L188.1 730.3L185.7 729.1L181.8 726.2L179.6 724.8L181.7 724.7L184.6 722.4L186.9 722.9L183.2 720.5L182.5 718.9L180.8 715.6L179.0 714.1L175.9 711.2L177.8 710.2L182.0 709.4L180.4 707.6L180.8 704.5L182.5 703.8L185.7 702.0L185.7 699.4L186.9 695.9L189.6 694.8L193.1 695.9L194.1 692.9L195.6 690.9L200.2 689.8L202.9 689.7L202.1 687.4L202.4 683.8L200.5 682.3L200.3 679.5L200.1 677.9L198.6 674.5L198.6 671.2L196.8 675.5L193.1 678.6L192.5 681.2L190.8 684.3L191.2 686.0L190.2 687.2L186.9 689.1L184.0 689.7L182.0 687.9L179.9 684.7L179.6 683.5L175.5 683.7L173.4 682.3L172.8 679.7L170.9 677.4L174.6 674.3L178.0 672.8L180.8 673.7L183.6 671.1L185.7 668.8L187.6 665.4L189.4 662.6L191.9 660.8L194.7 660.4L198.0 661.4L199.4 660.0L202.9 658.9L203.5 656.9L205.4 654.0L208.3 652.8L209.7 650.6L208.0 646.0L210.6 644.9L213.4 645.0L214.9 646.9L217.0 648.8L219.6 649.0L220.7 646.9L224.0 646.5L226.3 645.0L230.0 644.2L232.1 642.6L234.6 640.5L238.0 641.6L241.1 641.4L243.0 642.2L246.6 641.4L248.8 643.2L252.3 645.6L254.0 646.0L257.6 643.9L258.5 643.7L261.4 643.2L263.9 643.2L267.0 645.0L270.2 645.0L272.7 648.1L276.2 648.0L279.5 647.4L281.7 647.0L283.9 648.7L288.4 647.5L291.0 648.8L292.4 651.9L295.1 653.7L296.5 657.0L299.8 655.2L301.0 654.3L299.6 652.0L299.3 648.0L299.0 645.6L299.7 642.6L301.0 639.5L300.3 636.4L301.7 633.8L300.5 631.0L300.6 628.8L300.6 625.2L301.4 623.5L302.5 620.2L304.2 618.0L307.0 616.2L309.5 619.2L313.4 620.0L312.5 623.5L314.9 626.0L312.9 628.3L314.3 631.0L314.1 634.3L316.6 636.5L317.0 640.2L318.2 643.1L321.7 645.7L322.9 647.1L325.9 650.3L328.2 651.2L329.0 654.5L331.5 652.8L335.3 653.6L337.5 650.9L340.2 651.2L341.9 650.4L345.3 649.3L348.3 650.2L351.1 649.7L351.4 648.4L355.0 647.6L356.6 648.0L360.8 647.1L362.1 644.9L366.2 645.6L368.0 644.8L371.2 644.2L374.6 643.3L376.2 642.8L379.2 642.9L382.6 642.0L386.5 640.8L387.5 641.7L391.9 640.7L393.9 640.2L397.4 641.1L399.2 641.2L403.8 641.7L405.5 640.4L410.3 641.6L412.2 641.6L414.6 642.3L418.0 642.1L419.1 643.0L422.1 641.3L425.1 642.7L428.4 642.0L430.7 643.0L433.7 643.8L434.8 645.4L438.8 646.3L440.9 645.4L443.6 647.8L445.4 647.6L448.3 649.7L452.1 649.6L454.8 652.1L456.5 652.2L460.0 652.4L461.7 655.2L465.1 656.9L467.6 657.7L470.2 658.3L473.1 660.7L475.2 661.4L477.7 663.7L478.7 665.0L481.5 667.6L483.9 668.7L484.1 670.8L487.2 673.0L488.7 675.3L492.5 677.1L494.0 679.7L496.1 679.5L499.9 681.6L501.7 683.8L503.8 685.6L504.3 688.0L506.4 688.6L508.8 691.5L510.3 695.0L509.7 698.4L510.4 701.1L509.3 703.8L513.0 705.5L516.6 705.3L519.1 703.9L523.5 703.8L528.0 702.5L530.5 701.7L533.4 700.3L536.0 697.5L537.3 695.9L540.4 695.8L542.2 694.4L542.5 696.5L540.3 699.4L541.5 701.5L545.2 699.4L548.5 697.1L551.1 695.9L555.0 693.0L557.8 691.0L560.9 689.5L563.8 687.0L566.8 685.6L569.8 684.0L572.7 682.6L575.0 684.5L576.7 686.3L580.6 686.6L581.6 682.6L580.0 678.5L577.7 674.7L580.6 671.8L584.0 669.8L587.0 669.4L591.6 667.6L595.0 669.2L598.0 669.4L601.4 669.7L604.8 668.5L606.4 668.5L608.4 669.6L611.0 673.0L614.1 675.1L616.5 676.8L619.8 678.6L622.7 678.0L624.3 679.1L627.9 682.2L629.7 683.2L631.4 684.5L632.9 688.6L635.0 690.2L636.2 693.0L637.1 696.4L638.5 699.0L641.1 701.2L644.0 703.1L645.5 704.2L647.8 705.4L650.7 707.7L651.7 711.3L652.3 712.8L651.6 716.5L653.7 720.0L654.2 721.7L655.5 723.0L659.2 724.4L661.2 727.0L663.8 728.8L665.2 731.2L666.5 734.0L667.6 735.9L670.0 739.2L672.6 742.3L675.2 744.4L674.9 748.3L676.0 751.4L674.8 754.4L674.3 756.7L678.0 755.0L678.9 752.1L680.4 750.6L683.0 749.5L687.4 750.6L691.0 750.8L693.6 751.4L694.0 755.0L696.2 756.7L697.5 758.2L698.0 762.0L699.8 765.7L700.6 769.0L702.7 771.6L705.0 774.2L708.4 777.7L707.6 781.2L705.6 780.0L701.4 779.4L700.9 782.8L699.7 785.5L699.2 788.0L700.0 791.6L699.2 794.2L698.5 797.8L699.0 800.0" stroke="#000"/>
<path d="M800.0 560.0L798.0 564.0L796.5 570.0L797.5 584.0L796.0 594.0L797.0 606.0L795.5 616.0L796.5 628.0L795.5 639.0L797.0 649.0L800.0 652.0Z" fill="#004164" stroke="#000"/>
<path d="M782.0 644.5L777.1 650.4L780.0 658.3L775.1 664.2L777.1 672.0L782.0 680.0L786.0 686.0L787.6 697.2L782.3 704.2L780.6 711.2L777.1 716.5L777.5 724.0L780.1 724.0L779.7 716.5L783.2 711.2L784.9 704.2L790.2 697.2L788.6 686.0L784.6 680.0L779.7 672.0L777.7 664.2L782.6 658.3L779.7 650.4L784.6 644.5Z" fill="#004164" stroke="#000"/>
<path d="M364.2 644.8L365.9 642.5L366.6 641.2L369.0 639.0L369.0 635.1L370.0 632.0L369.7 629.4L369.7 626.3L372.0 630.0L376.0 629.0L379.0 626.0L382.6 624.5L382.6 627.2L381.0 630.0L380.8 634.0L384.3 636.0L386.3 636.5L391.0 638.0L387.1 638.6L384.0 640.5L380.6 641.7L378.4 642.5L375.3 642.5L373.3 643.3L369.8 643.0L366.2 644.7Z" fill="#004164" stroke="#000"/>
<path d="M337.0 651.0L337.0 647.9L338.5 646.0L341.0 648.0L343.5 644.0L346.0 645.0L347.3 642.8L349.0 640.0L352.0 638.0L355.0 637.5L354.0 641.0L351.0 644.0L349.0 648.0L345.9 648.4L344.0 650.0L340.1 650.9Z" fill="#004164" stroke="#000"/>
<path d="M412.2 638.3L416.0 636.0L418.0 634.4L421.4 633.7L424.0 631.0L425.2 633.9L427.0 635.5L430.5 635.6L434.0 635.0L435.9 634.6L439.7 634.2L441.7 633.7L444.0 632.5L446.8 636.0L448.2 638.3L449.0 642.0L445.3 640.2L442.0 640.0L438.0 640.2L435.7 640.2L431.9 641.8L430.0 642.0L427.0 642.7L423.0 642.4L420.7 641.5L416.3 640.9L414.0 641.0Z" fill="#004164" stroke="#000"/>
<path d="M468.5 651.2L472.0 649.5L474.1 651.5L476.0 653.0L479.0 651.9L481.0 651.5L483.7 651.1L486.0 649.4L489.0 647.0L492.5 646.6L490.0 650.0L488.7 651.5L486.0 654.0L482.0 656.0L480.6 658.4L478.7 660.5L479.9 663.5L481.0 665.0L484.0 668.0L487.2 669.4L491.0 668.0L495.0 670.0L497.1 671.4L499.2 673.0L497.0 676.0L495.2 675.2L492.0 674.0L488.7 672.2L486.0 671.0L484.0 668.5L482.2 667.7L480.0 665.5L477.4 663.8L475.0 661.0L474.2 658.6L472.0 656.0L470.5 653.0Z" fill="#004164" stroke="#000"/>
<path d="M196 721L198 721L198 719M186 702L185 700L183 699L185 697M193 701L194 702L194 702M212 695L212 694L210 695L208 694L208 694L208 694M221 668L221 670L220 671L221 671L221 673L223 673L224 671M212 672L211 674L211 672L211 671M215 675L212 675L212 675L214 676L214 677M205 673L207 674L207 672L207 674L207 673M183 715L183 716L183 715L185 714L186 716M211 684L212 682L212 681M212 686L213 687L214 686L213 685M213 677L213 674L210 673L209 674L211 674L214 676M211 696L211 697L209 699L210 699M198 709L199 711L200 710L200 708L198 711L199 711L201 711M203 681L205 679L206 681L207 682L207 684L209 682M205 671L204 671L204 673M212 698L210 700L207 699L210 700L208 699L208 700L208 699M218 677L216 675L215 673L214 671L215 672L217 670M183 725L181 727L181 727L183 728L181 728L182 727M202 694L201 694L200 696M187 724L185 722L187 721M179 711L181 710L178 708L177 708L176 707L174 705M178 712L180 711L179 713M205 700L204 700L203 699L200 698M202 676L200 676L201 676L202 677L204 679L203 678M194 698L194 699L192 698L191 695L190 694M189 709L189 706L188 704L187 702M187 704L189 702L191 703L191 705L192 705L191 705L189 707M209 699L210 700L209 700L209 702L210 704L211 706M202 707L203 707L200 708L202 708L202 709L200 710L198 708M188 714L187 715L187 716L185 718M205 677L204 675L205 674L205 672L203 671L204 672L205 671M200 695L201 698L202 697L200 697L198 694L199 697M211 681L209 683L209 685L210 683L212 683M199 694L200 694L199 692L199 691L198 691M220 676L222 675L221 675M189 728L192 728L191 729L192 729M195 724L195 725L193 726L192 728L193 727L191 729L189 729M188 709L188 709L186 710L184 710L185 710M211 693L210 691L209 689L208 687L208 689L209 689L209 689M221 671L221 673L223 671L225 670L226 670L225 672L227 670M201 695L199 694L198 694L198 696L200 697L201 696M212 679L213 678L211 677M200 704L199 705L197 705L199 704L198 706L197 706M195 708L193 708L194 708M188 709L187 707L186 707L187 705L188 706M214 679L213 681L211 681L212 683M219 666L221 665L219 662M194 726L195 728L198 727L196 729L197 727M207 689L209 689L207 687L205 686L207 687M211 689L213 689L211 689L210 691L209 690M218 665L217 665L216 665L216 666L214 665L211 665M220 666L223 665L224 665L225 667L223 669M181 713L183 712L182 712L182 714L180 716L182 717M193 718L193 717L191 717M206 696L205 699L207 701L206 699L204 699L205 699L204 698M207 671L206 671L205 673L204 671L202 670M187 719L189 717L189 719L191 721L188 720L187 718M188 717L186 718L187 716M191 710L192 708L189 708L189 708M206 691L206 689L205 692L204 692L203 692M210 677L210 675L208 673M203 688L201 686L199 687L199 688M213 684L216 684L214 686M194 726L195 728L196 730L196 730L195 730L195 728L197 726M185 725L186 724L185 724M206 684L206 685L206 685L203 685M220 672L223 673L224 672M184 718L181 717L183 715L185 714M214 673L216 673L217 673L215 673L214 672L215 671L214 670M213 681L211 683L213 683L213 684L215 682L215 684L216 684M190 699L190 701L191 702L190 700L188 698M205 693L204 691L204 691L202 689L202 688L202 688L202 687M215 674L217 672L215 670M212 691L215 689L216 691L217 691L217 691M183 727L181 727L183 725M185 705L186 705L187 705L184 706L187 707L187 707L186 707M219 668L217 671L216 671L214 673L216 676L215 673M184 726L186 727L185 729L184 728M216 693L216 692L215 693L213 695M193 720L195 718L197 720L199 718L197 716L195 718L197 718M209 688L211 689L211 688L212 689L209 689M203 683L200 681L202 684L199 684L199 685L197 685M192 721L193 719L194 721L193 720L195 721M202 670L201 669L201 671L199 673L196 672M188 726L187 728L187 730L185 731L186 731L184 732L184 734M197 701L195 701L197 702L195 701L197 700M200 674L203 673L205 675L203 676L202 674M189 725L187 724L188 725L188 726L188 724L188 724M196 703L198 704L198 706L199 706L198 704L196 704M188 712L187 711L188 710L190 709L187 711L187 712M186 713L186 711L187 711L188 711M200 691L199 692L198 694L196 696L196 694L195 693M196 712L196 710L195 709L197 712L200 714M219 667L219 668L218 670L217 671M202 671L201 673L200 673L198 672L197 670L198 669M198 693L199 692L201 694M207 680L207 682L205 682M213 677L214 676L216 676L217 677L219 678L221 677M208 700L209 698L207 698L209 697L209 697L211 698M208 698L210 697L210 699L208 700L208 698M205 686L204 688L205 690L203 689L202 687M185 713L185 713L187 711L188 713M185 727L186 725L186 725L185 724L186 724L188 722L186 723M205 675L207 674L205 677L203 678M199 699L201 699L201 698M179 710L179 713L182 712L181 710L182 709L180 707L178 707M209 680L212 679L213 680L211 681M190 702L189 704L188 706L189 704L187 705L188 702M190 714L193 715L193 715L196 716M221 671L222 670L221 672L223 673M202 683L203 684L204 684M212 679L211 677L210 676L210 678L212 675L214 677M189 722L190 724L189 722L189 724L188 725L190 724L190 725M188 715L188 713L189 715L188 715L190 717L190 717M203 676L201 677L200 678L200 679M216 680L215 678L216 679L214 680L213 680L211 678M199 702L201 701L199 701L199 702L197 703M209 697L211 697L213 699M210 675L212 672L212 670L214 669L214 670M211 697L210 698L212 699M190 704L190 703L189 703M193 715L196 717L195 715L193 717L192 716L190 715M191 714L192 715L191 716L190 716M215 686L214 684L214 684L212 684M215 671L217 671L216 669L215 669M183 708L184 707L182 704L184 704L182 704L185 703M203 672L203 671L201 671L203 673M176 711L176 712L174 714L173 716L175 716L172 718L172 719M215 688L216 689L218 688L220 690M187 721L189 723L189 725L188 723L189 722M210 681L211 681L210 680L209 678L207 677L207 678L209 676M182 725L182 726L180 727L182 725L183 727L183 727L184 727M212 686L214 687L216 688L218 687M195 702L195 704L197 703L196 704L196 704M188 710L189 712L187 710L185 707L183 705M218 669L218 667L216 665L215 664L214 663L212 663L214 664M185 712L187 711L187 713L185 712L183 712L186 712M219 674L218 673L217 675L216 673M204 687L204 689L204 690M195 710L196 710L198 712L198 713M203 698L202 699L200 700L198 702L199 701L199 700L199 700M187 720L186 722L188 724L186 724L188 721M204 687L205 687L203 687M195 702L193 700L192 700L194 702L194 703L196 701L195 700M184 709L185 710L188 712L187 710L186 711M199 676L197 676L195 676L196 678M184 717L183 717L183 720L183 719L182 718L183 716L181 714M212 685L211 684L210 682L212 682M205 680L203 681L202 678M216 695L217 697L217 699L216 699L217 697L216 699M202 671L204 670L205 672L204 674L205 674L204 673L204 672M205 703L208 703L206 703L204 704L203 706M203 688L203 688L201 690L202 688M209 673L209 671L207 672M191 709L189 711L190 712M185 713L184 711L185 710M216 672L215 671L216 672L218 670L219 670M218 669L216 672L217 673L215 670L213 669M206 675L206 676L205 676L206 675M212 683L214 683L215 685M191 717L192 715L193 715L194 716L193 714M205 694L206 693L207 695M212 697L210 698L211 697L212 699M206 701L208 699L207 697L208 695M208 697L207 695L207 695L209 694L208 696L206 697M191 720L191 722L192 720L194 722L194 721L195 718L195 716M218 684L219 684L217 683M202 670L205 670L206 669L205 667L204 668L205 669M208 670L209 669L207 671L206 670L207 669M154 734L152 732L150 733M172 730L173 727L175 729L176 729M153 737L154 739L152 737L154 735L156 734L153 736L154 736M159 732L159 735L161 736L164 739L164 740L162 741L163 740M160 737L162 737L162 738L161 740L162 738M163 733L162 731L162 730L161 733L159 734L158 736M151 729L152 727L152 727L150 727L148 727L150 727L151 728M148 751L146 752L145 751L148 751L149 749L150 747L149 746M151 722L151 724L151 726L152 728M156 740L157 738L158 736L158 737L156 740M150 728L150 730L150 728L149 726L151 728L152 729L152 728M153 728L152 726L152 728M150 744L149 743L148 745L147 747L148 745L147 743L149 744M145 717L147 716L146 718L145 717L145 716M152 746L150 744L151 743L150 743L148 743L149 746L151 743M165 736L166 737L165 739L163 737L166 736M156 745L155 745L155 743L154 742M156 720L159 718L157 720L158 720M157 742L158 740L159 739L159 739M150 748L149 748L151 748L152 747L154 745L154 747L153 746M145 717L143 714L141 714L143 713L143 711M152 712L152 710L154 712L153 710M150 732L151 734L149 733M169 737L169 738L168 740L169 738L170 739L172 739M145 723L143 724L144 723L142 721L140 722M147 743L146 744L148 743L150 743L149 744L151 743M166 733L166 732L166 731L165 731L163 733L165 731M165 726L167 727L165 727M151 742L153 741L151 740L152 742L151 739M165 724L165 723L167 721L168 719L169 719L171 716M163 727L165 727L163 726L162 726L161 724L162 725M154 751L156 752L156 754L157 757M149 722L148 722L150 721M167 735L165 732L167 734L168 732L169 731L169 730M154 731L152 729L153 727L152 729L153 731M152 742L149 743L148 742M158 717L156 719L156 717L156 717L158 716L156 718L158 719M153 717L152 720L150 717L152 720L151 719M153 724L156 725L157 725L156 725L158 724L158 724M149 751L147 751L150 752M171 737L173 739L175 736M165 733L165 733L165 734L165 733L165 732M146 750L147 751L146 752L146 750L147 749M168 731L168 734L166 735L165 734L164 733L165 731M155 725L153 723L151 721L151 723L151 722L149 722M159 730L160 728L161 727L161 726M156 724L155 724L153 723L153 722L153 724L152 723M158 732L160 730L160 732L160 731L158 731L158 732M154 727L155 726L155 726L157 725L159 726L159 727L158 725M161 730L159 731L162 732M150 713L150 713L151 714L153 713L150 714L151 715M151 713L149 711L151 711M167 730L168 731L169 729M165 723L165 721L167 720L166 719M152 745L152 747L153 746L152 746L151 746L150 744L149 745M159 739L160 737L158 739M151 728L152 730L153 729L155 729M158 736L156 738L158 738M151 740L153 740L151 741L152 741L152 740M147 712L148 711L150 712L148 710M152 734L153 735L152 734L152 732L154 733M152 750L151 751L150 751L148 751L149 750M175 732L175 729L176 731L178 730L177 729M151 729L151 728L151 726L149 725M149 722L148 722L147 723L145 725M164 729L161 729L161 730M158 744L157 745L155 743M147 746L145 745L146 744M152 733L152 733L151 732M151 715L152 715L151 713L149 711M151 740L152 739L151 736M157 731L157 729L158 728L157 729L157 731M155 714L156 715L157 714L159 714M152 740L150 739L149 738L147 737M170 730L170 729L168 729L166 731L164 730L163 731M176 734L177 735L175 737L177 739L179 740L180 741M154 749L155 750L152 751L154 753L156 751L156 752L158 752M157 736L159 735L157 736L158 735L159 737M148 743L147 742L145 743L143 742L143 740L142 742M150 746L151 748L149 749L147 751L145 749L148 749M151 746L153 749L152 748L154 749L155 751L157 751L155 752M147 720L149 719L148 717L148 719L149 718L151 720L152 718M165 728L164 729L165 728L165 729L167 729M146 744L146 744L147 746M145 723L143 726L142 724L144 724M105 752L104 752L104 754L105 756M138 746L137 748L137 746L137 748L136 749M59 738L58 737L55 736L55 739L57 737L56 739L55 738M77 740L78 740L76 742L77 742L76 740L78 738M78 743L80 742L78 742L79 741L81 743L79 743L76 743M139 750L137 750L139 752L140 754L138 752L139 754L138 753M127 748L127 748L126 750L127 748L128 747M73 746L70 743L71 742L70 740L72 742L72 744M66 736L66 738L68 740L69 740M115 746L117 747L119 748L119 748L121 747L120 748L122 745M56 742L58 741L55 742M66 738L68 738L69 736M135 751L136 750L137 748L139 750L139 748L141 745L141 745M59 745L60 744L60 745M74 749L75 752L74 754M60 742L60 744L62 744L60 745M64 735L62 737L59 739L61 740M120 749L121 751L123 752L124 750L123 747M129 746L128 746L126 746L129 745L126 744L126 746L127 746M67 748L67 745L67 745L68 747L70 747L69 747M85 745L86 747L88 747L89 746M125 749L123 747L124 747L122 749M104 750L103 751L103 752L105 749L103 749M130 751L130 751L131 752L131 750L132 748L131 747M113 746L114 746L116 747L114 747M87 746L85 746L86 745L87 746M75 750L77 748L74 747L77 745M112 751L115 749L113 747L114 745L116 746L115 748L113 748M63 748L65 745L67 746L69 746L69 746L71 744M59 743L59 744L59 742L57 742L59 741M116 747L118 747L116 747L117 745L116 747L118 745M78 738L76 739L78 740L76 738L74 739M106 742L109 745L109 743L110 744L108 742L106 743M133 748L132 750L131 751M76 738L74 737L72 736L74 737L74 737M120 747L118 746L118 743L117 745L119 744M121 747L122 748L121 749L120 750L119 750M100 745L99 747L101 747L102 748L103 746L104 748L106 748M64 751L64 752L65 753L66 752L65 749L66 748L65 750M110 744L110 745L109 743M64 742L65 741L66 739L64 738L64 739L63 740L61 742M84 749L83 750L81 749M85 739L82 737L84 735L85 736L86 734L84 732L86 732M111 743L109 742L107 745L110 744M86 747L85 747L84 746L85 745L84 746M73 740L72 742L71 739L69 739L68 737M95 742L95 743L93 741M74 741L73 740L72 738M73 744L71 746L71 745L69 747L68 745L67 747M94 747L96 747L94 746M115 741L114 739L114 739L112 739L113 739M74 742L73 741L72 743L71 741L73 742L74 743L71 743M117 741L116 743L118 742M68 739L67 739L67 741L67 744L68 742L69 741M74 751L71 750L71 751L71 752L70 754M67 748L67 749L68 747L67 745L69 743L67 743L68 745M59 737L57 738L58 737L59 736M67 747L65 747L67 749L69 747L70 745L68 743M87 738L87 738L87 738L88 737L88 738L88 738L87 737M129 751L128 753L127 755L128 753M210 750L210 751L211 752L209 754L211 753L211 755M206 740L208 739L209 738L210 739M203 736L205 735L205 736L205 737M215 741L216 740L217 740L215 740L213 741M204 739L206 740L206 741L209 740L210 739M207 748L207 749L209 747L211 747L210 748L208 749L209 747M207 735L206 737L208 734L207 736M210 742L209 744L211 743L213 742L212 739M203 749L202 749L201 751L201 749L199 750M212 746L211 744L211 742L209 743M215 741L215 743L215 743L213 745M206 749L205 748L204 748L205 745L207 744L206 745M224 744L222 743L223 742L221 741M227 749L226 749L225 750L224 749L223 748" stroke="#000"/>
<path d="M212 672h1M215 677h1M218 671h1M201 699h1M199 709h1M222 676h1M202 697h1M220 663h1M183 718h1M190 709h1M186 725h1M189 699h1M216 674h1M196 722h1M197 705h1M199 670h1M203 688h1M212 682h1M191 726h1M215 671h1M216 670h1M210 677h1M187 713h1M204 688h1M203 679h1M191 713h1M194 715h1M218 684h1M159 737h1M153 729h1M159 721h1M173 740h1M172 717h1M149 743h1M166 733h1M159 733h1M167 720h1M149 711h1M162 731h1M158 732h1M160 738h1M148 747h1M139 754h1M70 737h1M124 748h1M132 748h1M60 742h1M120 745h1M82 750h1M73 739h1M70 742h1M129 754h1M210 748h1M207 746h1" stroke="#5c4e49"/>
<path d="M799 558L798 558L796 556L795 557L792 559M799 570L797 569L795 568L793 568L791 566L788 567L786 568L783 568L781 568M799 580L796 581L795 579L792 577L789 576M799 590L796 592L794 590L792 588L789 590L787 589L785 588L783 589L780 587L777 587M799 601L797 602L795 603L793 603L792 602L789 603L787 605L785 605L784 607M799 613L796 614L794 613L793 614L790 614L789 615L787 616L785 618L783 619L781 619L779 620L776 620M799 620L797 621L795 622L792 620L791 619L790 620L788 618M799 627L798 629L796 628L794 630L792 630L790 629L787 627L785 628L783 629M799 634L796 635L794 633L791 632L790 631M799 640L797 640L795 639L794 640L791 638L789 637L787 638L784 640L781 640L779 641L776 643L773 643" stroke="#000" stroke-width="1.5"/>
<path d="M243.6 672.5L247.3 677.4L248.5 684.8L247.3 690.9L245.4 697.1L242.3 702.0L238.6 706.9" stroke="#000" stroke-width="1.4"/>
<path d="M234.5 709.5L232.5 711.0" stroke="#000" stroke-width="1.4"/>
<path d="M230.0 716.0L227.5 719.0" stroke="#000" stroke-width="1.4"/>
<path d="M222.5 722.5L217.7 725.4" stroke="#000" stroke-width="1.4"/>
<path d="M242.3 687.2L238.6 690.9L236.2 694.6" stroke="#000" stroke-width="1.4"/>
<path d="M222.6 656.5L228.8 657.7" stroke="#000" stroke-width="1.4"/>
<path d="M234.9 658.9L242.3 656.5" stroke="#000" stroke-width="1.4"/>
<path d="M251.0 655.8L258.0 655.5L264.0 654.5L272.0 655.5L280.0 657.5" stroke="#000" stroke-width="1.4"/>
<path d="M305.0 657.7L314.0 656.5L329.0 654.5" stroke="#000" stroke-width="1.4"/>
<path d="M284.0 658.0L294.0 657.0" stroke="#000" stroke-width="1.4"/>
<path d="M330.0 654.0L344.0 651.0L360.0 647.5L374.0 645.0L389.0 643.0" stroke="#000" stroke-width="1.4"/>
<path d="M450.0 650.0L464.0 656.5L477.0 665.0L486.0 672.0" stroke="#000" stroke-width="1.4"/>
<path d="M495.0 680.0L498.5 684.0L499.9 688.5L500.4 696.4L502.9 702.3L505.3 706.7L508.0 705.0" stroke="#000" stroke-width="1.4"/>
<path d="M517.1 706.2L524.5 710.2L528.0 713.6L533.4 712.1L540.3 707.2L547.1 703.3L553.1 699.4L555.0 698.0" stroke="#000" stroke-width="1.4"/>
<path d="M557.0 696.9L562.9 693.0" stroke="#000" stroke-width="1.4"/>
<path d="M0.0 99.3L149.0 99.3L150.8 103.6L151.3 104.7L154.7 108.5L155.5 112.7L152.2 115.4L152.8 119.6L151.3 122.2L145.8 126.4L143.4 128.4L141.8 130.7L139.9 133.3L138.6 135.2L135.2 137.8L132.5 141.8L131.4 143.6L182.4 143.6M203.4 99.4L305.4 99.4L306.5 91.0L304.7 82.7L318.0 85.6L414.0 85.2L454.0 87.0L534.0 88.4L630.0 91.3L714.0 90.3L780.4 88.6L800.0 92.0M630.4 90.3L634.5 86.9L637.1 85.6L642.3 85.2L645.2 82.7L650.2 80.4L652.4 79.3L655.4 79.9L658.5 78.0L664.2 78.2L667.4 77.1L669.0 74.3L673.3 69.4L674.8 67.9L679.5 67.1L681.6 64.0L687.3 63.2L689.5 62.3L691.0 57.8L696.2 56.2L698.8 53.4L700.6 49.4L703.7 48.7L706.1 45.1L710.5 43.1L713.6 40.8L715.4 38.3L719.2 35.3L720.9 34.5L723.6 32.7L726.8 31.2L731.7 29.9L734.0 27.9L737.6 27.2L739.6 25.8L743.6 22.0L744.9 19.7L748.7 16.2L751.3 12.1L756.0 8.8L759.8 6.9L758.0 11.0L762.3 14.0L763.4 16.2L766.0 20.5L769.4 24.4L770.8 27.2L773.6 29.4L778.2 34.6L781.3 33.4L784.7 35.1L790.5 32.7L793.0 32.8L797.0 29.7L800.0 27.2M780.0 89.3L777.3 93.8L776.4 97.0L776.3 101.0L776.2 105.7L775.0 108.5L774.5 112.2L769.3 113.3L766.7 115.9L763.4 116.0L762.3 120.5L760.7 122.3L759.7 127.0L757.1 129.9L751.9 129.4L748.6 132.5L745.0 131.9L742.1 131.6L737.6 130.7L733.9 132.8L729.8 132.9L726.5 136.2L722.3 139.9L722.0 140.2L719.4 143.2L715.4 145.5L711.7 144.1L710.7 141.9L708.0 138.0L706.1 139.2L703.5 143.9L700.6 145.5L698.2 146.2L693.3 148.6L689.5 149.2L687.2 154.0L687.9 155.1L685.8 160.2L682.4 161.0L677.4 163.1L674.7 164.0L672.5 166.6L666.1 168.9L663.7 171.3L660.9 174.7L657.0 173.6L652.6 177.0L650.4 178.2L643.9 177.6L640.2 180.2L637.8 180.6L633.0 182.5L629.1 182.5L626.5 181.8L621.4 185.5L620.8 183.9L615.6 186.0L613.6 190.4L611.4 192.8L606.8 195.1L604.6 197.2L603.4 202.3L602.8 205.7L601.0 208.3L598.4 208.9L594.2 208.8L588.8 212.5L586.0 212.0L584.7 217.6L584.0 222.0L583.7 224.8L583.2 230.5L582.4 232.8M140.0 232.3L293.0 232.3L394.0 232.6L486.4 233.2L582.4 232.8L671.0 233.6M671.0 233.6L667.3 237.0L663.7 240.0L662.0 244.0L657.8 246.7L656.3 252.6L656.8 255.1L658.2 260.8L660.0 263.7L661.5 267.7L666.0 271.0L669.2 274.7L674.8 276.6L679.2 276.0L683.3 278.0L684.5 277.4L689.5 278.0L692.3 282.4L692.8 283.2L696.0 287.0L699.2 293.1L700.6 296.2L701.1 298.8L705.0 303.5L706.0 308.0L707.5 312.6L710.6 315.4L711.7 318.3L715.8 322.0L718.6 324.6L720.9 325.7L724.9 331.4L726.5 333.0L748.6 355.3L750.3 358.6L751.5 361.2L755.7 363.5L757.2 368.1L759.7 370.0L759.8 373.5L760.8 377.0L763.4 381.0L766.8 384.4L766.3 388.1L770.6 390.1L771.6 392.4L774.5 396.0L776.4 398.6L779.0 401.8L782.1 403.0L786.6 404.4L789.3 407.0L790.0 410.5L791.5 415.9L793.9 418.2L794.8 421.8L796.2 425.5L795.5 427.6L799.1 433.9L798.5 436.5L798.0 440.6L800.0 444.0M671.0 233.6L685.8 226.7L708.0 219.3L726.5 213.8L737.6 214.9L763.4 215.6L800.0 217.5M293.2 232.3L297.0 240.0L300.6 252.6L296.9 294.0L285.8 384.8L278.4 458.7L273.0 503.0L274.7 574.0L276.8 590.0L278.6 642.3L279.0 647.0M486.4 233.2L495.6 274.7L504.8 329.4L519.6 421.8L521.0 424.3L522.7 428.5L523.3 432.8L525.9 435.6L526.6 439.2L527.0 444.0L530.3 448.8L530.7 451.3L530.4 455.5L531.6 458.7L534.6 461.2L534.4 466.0L532.5 469.3L532.5 475.3L534.8 476.2L539.9 477.2L536.4 478.9L535.0 483.0L530.7 488.3L529.5 491.3L526.5 495.1L526.2 498.6L523.3 503.0L525.0 529.0L525.9 534.1L526.0 535.7L525.0 540.5L525.6 543.4L527.0 547.4L526.3 552.6L523.5 556.0L523.5 559.6L525.0 564.0L526.3 567.3L529.0 572.0L530.0 574.8L531.0 580.0L530.6 583.0L532.7 588.2L534.0 593.2L536.3 598.0M0.0 408.8L73.4 408.8M39.0 588.2L179.5 588.2L177.0 594.0L175.5 596.7L174.0 600.8L173.9 604.6L173.0 610.0L172.6 615.9L172.3 618.8L172.8 621.8L176.0 626.0L179.2 628.3L181.3 633.3L183.0 639.0L185.0 644.0L184.9 649.0L187.0 652.0L188.5 658.5L192.0 662.0M338.0 588.2L532.7 588.2M338.0 588.2L338.3 591.0L336.3 596.5L334.4 600.8L339.0 606.0L342.6 608.5L343.4 611.6L347.5 613.2L349.0 617.0L352.4 622.4L354.3 625.9L353.0 630.0L352.6 633.0L354.2 637.0L355.0 642.0M541.7 614.5L614.0 616.9L694.0 623.0L738.1 626.3L738.9 631.3L739.0 633.8L739.8 638.9L740.8 642.6L745.2 645.3L751.4 644.4L753.7 640.9L753.2 637.3L754.2 634.5L754.9 628.8L754.0 626.7L751.6 623.8L751.4 617.8L752.6 612.6L752.3 609.0L757.6 604.5L762.9 604.5L768.2 607.2L772.5 607.3L774.9 609.3L778.9 610.7L781.6 610.1L786.0 612.4L789.5 612.5L794.0 613.0" stroke="#000"/>
<path d="M195.8 2.5L195.0 2.8L194.3 3.0L193.5 3.3L192.9 3.6L192.4 4.2L192.2 4.9L192.2 5.7L192.5 6.4L193.0 7.1L193.7 7.5L194.5 7.7L195.3 7.7L196.1 7.6L196.9 7.4L197.7 7.2L198.4 6.9L199.2 6.8L200.0 6.8L200.7 7.0L201.4 7.4L201.9 8.0L202.2 8.8L202.2 9.6L202.0 10.4L201.6 11.1L201.0 11.7L200.3 12.1L199.5 12.4L198.8 12.6L198.0 12.8L197.3 13.0L196.5 13.3L195.9 13.6L195.3 14.1L194.8 14.6L194.5 15.2L194.4 15.7L194.4 16.4L194.7 16.9L195.2 17.5L195.8 17.9L196.5 18.3L197.2 18.6L198.0 18.8L198.7 19.1L199.5 19.4L200.2 19.8L200.8 20.2L201.3 20.8L201.6 21.6L201.7 22.4L201.5 23.2L201.1 23.9L200.6 24.5L200.0 25.0L199.3 25.5L198.6 25.9L198.0 26.5L197.5 27.3L197.2 28.3L197.4 29.4L197.9 30.4L198.7 31.0L199.7 31.2L200.5 30.9L201.2 30.5L201.8 30.0L202.3 29.5L203.0 29.1L203.5 28.7L204.1 28.7L204.6 28.9L204.9 29.4L205.1 30.1L205.1 30.9L204.9 31.6L204.5 32.4L204.1 33.1L203.8 33.8L203.7 34.6L203.9 35.3L204.5 35.9L205.3 36.3L206.1 36.4L207.0 36.3L207.7 36.0L208.3 35.5L208.9 35.0L209.5 34.3L210.0 33.7L210.5 33.0L210.9 32.4L211.4 31.7L211.9 31.1L212.6 30.6L213.2 30.1L214.0 29.7L214.9 29.5L215.8 29.4L216.8 29.5L218.0 29.9L219.2 30.6L220.0 31.3L220.9 32.3L221.5 33.5L221.8 34.4L221.9 35.5L221.7 36.5L221.4 37.3L221.0 38.0L220.5 38.8L219.9 39.4L219.3 40.0L218.7 40.5L218.1 41.0L217.6 41.6L217.0 42.1L216.5 42.7L216.1 43.3L215.7 44.0L215.5 44.7L215.5 45.4L215.5 46.2L215.8 46.9L216.2 47.5L216.7 48.0L217.3 48.5L218.1 48.8L218.9 49.0L219.7 49.1L220.5 49.1L221.3 49.1L222.1 48.9L222.9 48.8L223.7 48.7L224.4 48.6L225.2 48.6L226.0 48.7L226.7 49.0L227.4 49.5L228.0 50.1L228.4 50.9L228.7 51.8L228.7 52.7L228.6 53.7L228.3 54.6L227.9 55.3L227.3 56.1L226.7 56.7L226.1 57.2L225.4 57.6L224.7 58.1L224.0 58.5L223.3 58.9L222.7 59.3L222.1 59.8L221.6 60.4L221.1 61.0L220.8 61.6L220.5 62.3L220.4 63.0L220.4 63.7L220.6 64.5L221.0 65.2L221.5 65.8L222.1 66.3L222.9 66.6L223.6 66.9L224.4 67.1L225.1 67.2L225.9 67.3L226.6 67.5L227.3 67.8L228.0 68.3L228.4 68.9L228.7 69.7L228.6 70.5L228.3 71.3L227.8 72.0L227.0 72.4L226.2 72.7L225.4 72.6L224.6 72.4L223.8 72.1L223.1 71.7L222.4 71.3L221.7 70.9L221.0 70.5L220.3 70.3L219.5 70.2L218.7 70.3L218.0 70.5L217.4 71.0L217.0 71.6L216.8 72.4L216.8 73.2L217.1 73.9L217.5 74.6L218.2 75.2L218.9 75.6L219.6 75.9L220.3 76.2L221.1 76.5L221.8 76.8L222.5 77.2L223.1 77.6L223.6 78.2L224.1 78.8L224.5 79.5L224.7 80.2L224.8 80.9L224.7 81.7L224.5 82.4L224.2 83.2L223.7 83.8L223.2 84.4L222.6 85.0L221.9 85.5L221.2 86.0L220.4 86.3L219.7 86.6L218.9 86.8L218.1 86.9L217.3 87.0L216.5 87.1L215.8 87.1L215.1 87.2L214.4 87.4L213.8 87.6L213.3 88.0L213.0 88.4L212.9 88.9L212.7 89.6L212.7 90.3L212.9 91.1L213.1 91.8L213.4 92.6L213.7 93.3L214.0 94.0L214.1 94.8L214.0 95.6L213.7 96.3L213.2 96.9L212.5 97.4L211.7 97.6L210.9 97.8L210.2 97.8L209.4 97.7L208.7 97.5L207.9 97.2L207.2 96.9L206.5 96.7L205.8 96.4L205.1 96.1L204.4 95.8L203.7 95.6L203.0 95.3L202.3 95.1L201.7 94.9L201.1 94.7L200.7 94.4L200.0 94.2L199.5 94.0L198.9 93.8L198.2 93.7L197.3 93.8L196.3 94.0L195.2 94.6L194.6 95.4L194.2 96.4L194.2 97.2L194.5 98.0L194.8 98.7L195.3 99.3L195.8 99.9L196.3 100.4L196.8 101.1L197.3 101.6L197.7 102.1L198.1 102.7L198.3 103.3L198.5 103.9L198.4 104.6L198.1 105.1L197.6 105.7L196.9 106.2L196.2 106.5L195.3 106.6L194.5 106.6L193.7 106.4L192.9 106.0L192.2 105.6L191.6 105.2L190.9 104.7L190.3 104.3L189.6 103.9L188.9 103.6L188.1 103.5L187.3 103.5L186.6 103.7L186.0 104.2L185.5 104.9L185.3 105.7L185.4 106.6L185.7 107.3L186.3 108.0L187.0 108.4L187.8 108.6L188.6 108.6L189.4 108.6L190.2 108.5L191.0 108.4L191.7 108.4L192.5 108.5L193.2 108.8L193.8 109.3L194.1 110.0L194.1 110.8L193.7 111.4L193.1 111.9L192.4 112.2L191.5 112.2L190.7 112.0L190.0 111.6L189.4 111.1L188.8 110.6L188.1 110.1L187.5 109.7L186.7 109.5L185.9 109.5L185.2 109.8L184.7 110.3L184.3 111.1L184.4 111.9L184.7 112.7L185.2 113.3L186.0 113.7L186.8 113.9L187.6 114.0L188.4 113.9L189.2 113.8L189.9 113.8L190.7 113.8L191.5 114.0L192.2 114.3L192.7 114.8L193.1 115.4L193.3 116.2L193.2 116.9L192.8 117.6L192.3 118.1L191.5 118.5L190.7 118.7L189.9 118.7L189.1 118.5L188.3 118.2L187.7 117.8L187.1 117.3L186.5 116.8L185.9 116.3L185.2 115.9L184.5 115.6L183.7 115.5L183.0 115.7L182.3 116.0L181.7 116.6L181.3 117.4L181.2 118.4L181.3 119.2L181.6 120.1L182.1 120.9L182.7 121.5L183.4 122.0L184.1 122.5L184.8 122.9L185.5 123.4L186.1 123.9L186.6 124.6L187.0 125.3L187.1 126.0L187.1 126.8L186.9 127.6L186.6 128.3L186.2 128.9L185.7 129.5L185.2 130.0L184.6 130.4L183.9 130.8L183.3 131.1L182.7 131.5L182.1 131.8L181.6 132.1L181.1 132.2L180.6 132.5L180.3 132.6L180.0 133.1L179.8 133.5L179.5 134.1L179.4 134.7L179.3 135.4L179.3 136.2L179.4 137.1L179.6 138.0L180.0 138.8L180.4 139.5L181.0 140.1L181.6 140.7L182.2 141.3L182.9 141.8L183.5 142.2L184.2 142.7L184.8 143.2L185.3 143.7L185.7 144.2L186.1 144.9L186.4 145.5L186.5 146.2L186.5 147.0L186.3 147.8L186.0 148.5L185.4 149.1L184.8 149.6L184.1 150.0L183.4 150.3L182.6 150.6L181.9 150.7L181.1 150.8L180.4 151.0L179.7 151.1L179.0 151.3L178.4 151.5L178.0 151.6L177.6 152.0L177.3 152.3L177.2 152.8L177.0 153.5L177.1 154.1L177.2 154.8L177.4 155.6L177.8 156.3L178.1 157.0L178.5 157.7L178.9 158.4L179.3 159.1L179.6 159.8L179.8 160.6L179.8 161.4L179.7 162.2L179.4 162.9L178.8 163.5L178.2 163.9L177.5 164.2L176.7 164.3L175.9 164.3L175.1 164.1L174.3 163.9L173.6 163.6L172.8 163.4L172.0 163.3L171.3 163.3L170.5 163.5L169.8 163.8L169.2 164.4L168.7 165.1L168.5 165.9L168.5 166.7L168.7 167.5L169.1 168.3L169.6 168.9L170.2 169.5L170.8 170.0L171.4 170.5L172.0 171.0L172.6 171.5L173.0 172.1L173.3 172.8L173.5 173.5L173.5 174.3L173.3 174.9L172.8 175.6L172.3 176.0L171.5 176.3L170.7 176.4L169.9 176.3L169.1 176.0L168.4 175.6L167.8 175.2L167.2 174.7L166.6 174.1L166.0 173.6L165.4 173.2L164.7 172.9L163.9 172.7L163.1 172.9L162.4 173.2L161.8 173.8L161.4 174.6L161.3 175.5L161.4 176.3L161.8 177.1L162.4 177.7L163.1 178.1L163.9 178.4L164.7 178.5L165.5 178.5L166.3 178.4L167.1 178.4L167.9 178.4L168.7 178.4L169.4 178.5L170.2 178.8L170.8 179.2L171.3 179.7L171.7 180.4L171.8 181.1L171.7 181.9L171.4 182.6L170.9 183.3L170.1 183.7L169.3 184.0L168.5 184.0L167.7 183.7L167.0 183.3L166.3 182.8L165.8 182.1L165.3 181.5L164.8 180.8L164.3 180.2L163.8 179.6L163.2 179.1L162.5 178.7L161.8 178.5L161.1 178.5L160.4 178.7L159.9 179.1L159.5 179.7L159.4 180.3L159.6 181.1L160.0 181.6L160.5 182.3L161.2 182.8L161.8 183.3L162.5 183.7L163.3 184.0L164.0 184.4L164.7 184.8L165.3 185.2L165.9 185.8L166.4 186.3L166.8 187.1L167.0 187.9L167.0 188.7L166.9 189.6L166.5 190.6L166.0 191.3L165.3 192.1L164.5 192.7L163.7 193.1L162.8 193.3L161.9 193.4L161.1 193.3L160.3 193.1L159.5 192.7L158.9 192.2L158.2 191.7L157.7 191.1L157.2 190.5L156.8 189.8L156.3 189.2L155.8 188.6L155.2 188.1L154.6 187.7L153.9 187.4L153.1 187.2L152.2 187.4L151.4 187.7L150.6 188.4L150.1 189.2L149.6 190.2L149.5 191.2L149.7 192.1L150.0 192.9L150.6 193.6L151.2 194.1L151.9 194.5L152.6 194.9L153.4 195.3L154.1 195.6L154.8 196.0L155.5 196.4L156.1 196.8L156.7 197.3L157.1 197.9L157.5 198.5L157.7 199.1L157.8 199.7L157.7 200.2L157.5 200.7L157.0 201.2L156.5 201.6L155.8 201.9L155.1 202.1L154.3 202.2L153.5 202.4L152.7 202.4L151.9 202.4L151.1 202.4L150.3 202.5L149.5 202.6L148.7 202.7L147.9 203.0L147.2 203.4L146.5 203.9L145.9 204.5L145.5 205.3L145.1 206.2L145.0 207.2L145.0 208.1L145.2 209.2L145.5 210.1L146.1 211.0L146.7 211.6L147.4 212.1L148.2 212.4L149.0 212.6L149.8 212.6L150.7 212.7L151.5 212.7L152.3 212.7L153.1 212.9L153.9 213.1L154.6 213.6L155.2 214.2L155.6 215.1L155.6 216.0L155.4 217.1L154.8 218.0L154.1 218.6L153.3 218.7L152.5 218.8L151.7 218.8L150.9 218.9L150.1 218.9L149.3 218.9L148.6 219.0L148.0 219.2L147.5 219.3L146.9 219.6L146.5 219.9L146.1 220.4L145.7 221.0L145.5 221.6L145.3 222.4L145.1 223.1L145.1 223.9L145.1 224.7L145.1 225.5L145.2 226.3L145.3 227.1L145.4 227.9L145.7 228.6L145.9 229.4L146.2 230.1L146.4 230.8L146.5 231.6L146.4 232.3L146.2 232.9L145.8 233.5L145.1 233.8L144.3 233.9L143.5 233.8L142.8 233.4L142.2 232.8L141.7 232.2L141.2 231.5L140.7 230.9L140.0 230.5L139.3 230.5L138.5 230.8L138.1 231.5L138.1 232.3L138.5 233.0L139.1 233.5L139.9 233.9L140.6 234.0L141.4 234.2L142.1 234.5L142.8 234.9L143.2 235.5L143.5 236.2L143.4 237.0L142.9 237.7L142.2 238.1L141.4 238.2L140.6 238.0L139.9 237.5L139.3 237.0L138.9 236.3L138.4 235.6L137.9 235.0L137.2 234.6L136.5 234.3L135.8 234.3L135.1 234.6L134.6 235.1L134.3 235.7L134.2 236.4L134.2 237.2L134.4 238.0L134.7 238.7L135.0 239.5L135.3 240.2L135.5 241.0L135.6 241.8L135.5 242.6L135.3 243.3L134.8 244.0L134.2 244.5L133.4 244.8L132.6 244.9L131.8 244.8L131.0 244.5L130.3 244.2L129.6 243.8L128.9 243.3L128.3 242.8L127.7 242.3L127.0 241.9L126.3 241.6L125.5 241.5L124.6 241.7L123.7 242.0L122.9 242.6L122.2 243.6L121.7 244.6L121.6 245.6L121.7 246.6L122.2 247.3L122.7 248.0L123.3 248.6L124.0 249.1L124.7 249.5L125.4 249.9L126.1 250.3L126.7 250.8L127.3 251.4L127.8 251.9L128.3 252.6L128.6 253.2L128.9 254.0L128.9 254.7L128.8 255.5L128.6 256.3L128.2 257.1L127.6 257.8L127.0 258.4L126.3 258.9L125.6 259.3L124.9 259.6L124.1 259.9L123.3 260.1L122.5 260.4L121.7 260.6L121.0 260.8L120.2 261.1L119.5 261.4L118.8 261.9L118.1 262.3L117.6 262.9L117.1 263.6L116.7 264.3L116.4 265.1L116.2 265.9L116.2 266.7L116.2 267.6L116.4 268.4L116.6 269.2L116.9 269.9L117.2 270.6L117.6 271.4L118.0 272.0L118.4 272.7L118.8 273.3L119.2 274.0L119.6 274.7L119.9 275.4L120.1 276.1L120.3 276.9L120.3 277.6L120.2 278.4L120.0 279.2L119.7 279.9L119.2 280.6L118.7 281.2L118.0 281.7L117.3 282.2L116.6 282.6L115.8 282.8L115.0 283.1L114.3 283.2L113.5 283.2L112.7 283.1L111.9 283.0L111.2 282.9L110.4 282.8L109.7 282.8L109.0 282.8L108.3 283.0L107.7 283.3L107.3 283.8L107.1 284.2L107.2 284.7L107.4 285.4L107.8 286.0L108.3 286.7L109.0 287.2L109.8 287.5L110.5 287.7L111.3 287.9L112.1 288.0L112.9 288.1L113.7 288.2L114.4 288.6L114.9 289.1L115.1 289.9L114.9 290.9L114.4 291.7L113.5 292.3L112.6 292.4L111.8 292.1L111.2 291.5L110.8 290.8L110.6 290.1L110.3 289.3L110.1 288.6L109.7 287.9L109.1 287.4L108.4 287.1L107.7 287.0L107.2 287.2L106.8 287.7L106.7 288.4L106.8 289.1L107.0 289.9L107.3 290.6L107.8 291.3L108.2 292.0L108.6 292.7L108.9 293.4L109.1 294.1L109.2 294.9L109.1 295.7L108.8 296.4L108.4 297.1L107.8 297.7L107.2 298.2L106.4 298.5L105.7 298.7L104.8 298.7L104.0 298.7L103.2 298.6L102.4 298.4L101.6 298.2L100.9 298.0L100.1 297.8L99.3 297.7L98.5 297.7L97.7 297.9L96.9 298.2L96.2 298.6L95.6 299.1L95.2 299.8L94.8 300.6L94.6 301.4L94.5 302.2L94.5 303.0L94.5 303.8L94.4 304.6L94.3 305.3L94.2 306.1L93.9 306.8L93.5 307.5L92.9 308.0L92.3 308.4L91.5 308.6L90.7 308.7L89.9 308.8L89.1 308.7L88.3 308.6L87.5 308.5L86.7 308.4L85.9 308.4L85.1 308.5L84.3 308.8L83.5 309.2L82.8 310.0L82.3 310.8L81.9 311.8L81.8 312.7L82.0 313.7L82.3 314.6L82.8 315.3L83.4 315.9L84.0 316.5L84.7 317.0L85.4 317.5L86.0 318.0L86.6 318.5L87.0 319.2L87.3 319.9L87.3 320.7L87.2 321.5L86.8 322.2L86.2 322.8L85.6 323.3L84.9 323.6L84.2 324.0L83.5 324.4L83.0 324.9L82.5 325.5L82.2 326.2L82.2 326.9L82.4 327.7L82.9 328.3L83.6 328.8L84.3 329.1L85.0 329.3L85.8 329.6L86.5 329.9L87.1 330.4L87.4 331.2L87.4 332.0L87.1 332.8L86.4 333.4L85.6 333.6L84.8 333.6L84.1 333.3L83.4 332.9L82.7 332.4L82.0 332.0L81.3 331.7L80.6 331.6L79.8 331.7L79.2 332.1L78.7 332.7L78.4 333.4L78.5 334.2L78.8 334.9L79.3 335.5L80.0 336.0L80.8 336.3L81.6 336.4L82.4 336.4L83.2 336.4L83.9 336.2L84.7 336.1L85.5 336.1L86.3 336.1L87.0 336.2L87.7 336.5L88.2 337.0L88.6 337.7L88.7 338.5L88.6 339.3L88.2 340.0L87.7 340.6L87.0 341.1L86.2 341.4L85.3 341.5L84.5 341.5L83.7 341.3L82.8 341.1L82.1 340.9L81.3 340.7L80.5 340.6L79.7 340.5L78.9 340.6L78.1 340.8L77.4 341.2L76.9 341.8L76.5 342.5L76.3 343.3L76.3 344.1L76.5 344.9L77.0 345.6L77.5 346.2L78.1 346.7L78.8 347.1L79.5 347.4L80.3 347.7L81.0 348.0L81.6 348.4L82.3 348.7L82.8 349.3L83.2 349.8L83.6 350.3L83.7 351.0L83.7 351.7L83.4 352.4L83.0 352.9L82.4 353.5L81.7 353.9L81.0 354.2L80.1 354.3L79.3 354.4L78.5 354.4L77.7 354.3L76.9 354.2L76.1 354.2L75.3 354.3L74.6 354.5L73.9 354.9L73.3 355.4L72.9 356.1L72.7 356.9L72.7 357.7L72.9 358.4L73.3 359.1L73.9 359.7L74.6 360.1L75.4 360.4L76.2 360.6L76.9 360.7L77.7 360.7L78.5 360.8L79.3 360.9L80.0 361.1L80.7 361.3L81.4 361.7L81.9 362.2L82.4 362.8L82.7 363.5L82.8 364.3L82.8 365.0L82.5 365.8L82.1 366.5L81.5 367.2L80.8 367.6L80.1 368.0L79.3 368.3L78.4 368.4L77.6 368.4L76.8 368.4L76.0 368.3L75.2 368.3L74.4 368.3L73.6 368.3L72.8 368.4L72.1 368.7L71.5 369.1L70.9 369.6L70.5 370.3L70.4 371.1L70.4 371.9L70.7 372.6L71.1 373.3L71.7 373.9L72.4 374.3L73.2 374.6L74.0 374.8L74.8 374.9L75.5 375.1L76.3 375.2L77.0 375.5L77.7 375.9L78.2 376.4L78.5 377.1L78.5 377.9L78.2 378.6L77.7 379.2L77.0 379.6L76.1 379.8L75.3 379.7L74.5 379.6L73.8 379.4L73.0 379.3L72.2 379.3L71.4 379.6L70.8 380.1L70.5 380.8L70.5 381.7L70.8 382.4L71.3 383.1L72.0 383.6L72.7 384.0L73.4 384.2L74.2 384.4L75.0 384.6L75.7 384.8L76.5 384.9L77.2 385.2L77.9 385.5L78.6 385.8L79.1 386.3L79.6 386.8L80.0 387.4L80.3 388.1L80.4 388.8L80.4 389.6L80.3 390.3L80.0 391.1L79.6 391.8L79.1 392.4L78.5 393.0L77.8 393.4L77.1 393.8L76.3 394.1L75.5 394.4L74.8 394.6L74.0 394.8L73.3 395.1L72.5 395.4L71.9 395.8L71.3 396.4L70.9 397.0L70.6 397.7L70.5 398.5L70.6 399.3L70.9 400.0L71.4 400.7L72.0 401.2L72.7 401.7L73.4 402.0L74.2 402.4L74.9 402.7L75.6 403.0L76.3 403.4L77.0 403.8L77.6 404.4L78.1 405.0L78.5 405.7L78.7 406.5L78.8 407.4L78.7 408.3L78.5 409.1L78.1 409.8L77.6 410.5L77.0 411.1L76.4 411.7L75.8 412.2L75.1 412.6L74.4 413.0L73.7 413.4L73.0 413.9L72.5 414.5L72.1 415.2L71.9 416.0L72.0 416.8L72.4 417.5L72.9 418.1L73.7 418.4L74.4 418.7L75.2 418.8L75.9 419.1L76.6 419.4L77.1 420.0L77.2 420.6L77.0 421.3L76.5 421.9L75.8 422.3L75.1 422.5L74.3 422.7L73.5 423.0L72.8 423.3L72.2 423.8L71.8 424.5L71.7 425.4L71.9 426.2L72.3 427.0L73.0 427.5L73.8 427.8L74.6 427.9L75.4 427.9L76.2 427.7L77.0 427.4L77.7 427.2L78.4 426.9L79.2 426.8L79.9 426.7L80.7 426.8L81.3 427.1L81.9 427.6L82.4 428.2L82.6 429.0L82.7 429.9L82.6 430.7L82.4 431.5L82.0 432.3L81.6 433.0L81.1 433.7L80.6 434.3L80.0 435.0L79.5 435.6L79.0 436.2L78.6 436.9L78.2 437.6L77.9 438.3L77.7 439.1L77.6 439.8L77.6 440.6L77.7 441.4L78.0 442.1L78.4 442.8L78.9 443.4L79.5 443.9L80.2 444.4L80.9 444.7L81.7 444.9L82.4 445.1L83.2 445.2L84.0 445.3L84.7 445.5L85.5 445.7L86.2 445.9L86.8 446.3L87.4 446.7L87.8 447.2L88.1 447.9L88.3 448.5L88.3 449.1L88.1 449.8L87.8 450.5L87.4 451.1L86.9 451.7L86.4 452.3L85.8 452.9L85.2 453.4L84.6 453.9L84.0 454.5L83.4 455.0L82.9 455.7L82.5 456.3L82.2 457.1L82.0 457.9L82.0 458.7L82.2 459.5L82.6 460.3L83.2 461.0L83.9 461.5L84.6 461.9L85.4 462.1L86.2 462.1L87.0 462.0L87.8 461.7L88.5 461.4L89.2 461.0L89.9 460.6L90.6 460.2L91.4 460.0L92.2 460.1L93.0 460.6L93.7 461.5L94.0 462.7L93.7 463.6L93.1 464.3L92.3 464.6L91.5 464.8L90.7 464.8L90.0 465.1L89.3 465.5L88.9 466.0L88.7 466.7L88.8 467.2L89.0 467.8L89.4 468.5L89.9 469.1L90.4 469.7L90.9 470.3L91.4 470.9L91.8 471.5L92.2 472.2L92.4 473.0L92.5 473.8L92.5 474.7L92.3 475.6L92.0 476.4L91.5 477.1L90.9 477.8L90.2 478.3L89.5 478.7L88.7 479.0L87.8 479.0L87.0 478.9L86.2 478.7L85.5 478.3L84.8 477.9L84.1 477.4L83.4 477.1L82.7 476.9L81.9 476.8L81.1 477.1L80.5 477.6L80.2 478.3L80.1 479.2L80.5 479.9L81.0 480.5L81.7 480.9L82.5 481.1L83.3 481.3L84.0 481.5L84.7 481.9L85.2 482.5L85.5 483.2L85.5 483.9L85.2 484.5L84.7 485.1L84.0 485.3L83.3 485.5L82.5 485.4L81.7 485.2L80.9 485.0L80.2 484.6L79.4 484.3L78.7 484.0L78.0 483.7L77.2 483.5L76.4 483.6L75.7 483.8L74.9 484.2L74.3 484.9L74.0 485.7L73.8 486.6L73.9 487.5L74.1 488.3L74.6 489.1L75.2 489.7L75.8 490.2L76.5 490.7L77.1 491.1L77.8 491.6L78.3 492.1L78.9 492.7L79.2 493.4L79.4 494.2L79.4 494.9L79.2 495.7L78.8 496.4L78.2 497.0L77.5 497.5L76.8 497.7L76.0 497.9L75.2 498.0L74.4 498.0L73.6 498.0L72.9 498.1L72.1 498.3L71.5 498.6L70.9 499.0L70.4 499.5L70.1 500.1L70.0 500.8L70.1 501.5L70.3 502.2L70.6 502.9L70.9 503.7L71.3 504.4L71.7 505.1L72.1 505.8L72.3 506.5L72.4 507.3L72.4 508.1L72.1 508.9L71.6 509.6L70.9 510.1L70.1 510.3L69.3 510.4L68.5 510.2L67.8 509.9L67.1 509.5L66.4 509.0L65.8 508.5L65.1 508.2L64.3 508.0L63.5 508.0L62.7 508.2L62.0 508.8L61.6 509.6L61.4 510.6L61.6 511.4L62.0 512.1L62.6 512.7L63.2 513.2L63.8 513.7L64.4 514.2L65.0 514.8L65.5 515.3L65.9 515.9L66.2 516.6L66.3 517.2L66.3 517.8L66.1 518.5L65.7 519.1L65.3 519.7L64.7 520.1L64.0 520.5L63.3 520.8L62.5 521.0L61.7 521.1L60.9 521.1L60.2 521.0L59.4 521.1L58.6 521.1L57.9 521.2L57.2 521.4L56.6 521.6L56.1 521.6L55.5 522.0L55.2 522.2L54.9 522.5L54.6 523.0L54.4 523.5L54.2 524.2L54.1 524.8L53.9 525.5L53.8 526.3L53.7 527.1L53.6 527.8L53.5 528.6L53.4 529.4L53.3 530.1L53.2 530.9L53.2 531.7L53.1 532.4L52.9 533.1L52.6 533.7L52.3 534.3L51.8 534.7L51.1 535.0L50.4 535.2L49.6 535.2L48.8 535.1L48.0 534.9L47.3 534.7L46.6 534.4L45.8 534.2L45.1 534.1L44.3 534.3L43.6 534.8L43.1 535.7L42.9 536.5L43.0 537.5L43.4 538.3L44.0 539.0L44.6 539.6L45.3 540.0L46.0 540.4L46.8 540.8L47.5 541.1L48.2 541.5L48.8 542.0L49.4 542.5L49.9 543.1L50.2 543.8L50.5 544.6L50.6 545.4L50.5 546.1L50.3 546.9L49.9 547.7L49.5 548.3L48.9 548.9L48.2 549.4L47.5 549.8L46.8 550.2L46.0 550.4L45.3 550.6L44.5 550.8L43.7 551.0L43.0 551.3L42.3 551.7L41.7 552.2L41.2 552.7L40.9 553.4L40.8 554.2L40.8 555.0L41.0 555.8L41.4 556.5L41.9 557.2L42.5 557.8L43.0 558.3L43.6 558.9L44.1 559.5L44.5 560.1L44.8 560.9L44.9 561.6L44.9 562.4L44.7 563.1L44.2 563.8L43.7 564.4L43.0 564.8L42.3 565.2L41.6 565.4L40.8 565.6L40.0 565.8L39.3 565.9L38.5 566.0L37.8 566.2L37.1 566.6L36.4 567.0L35.8 567.5L35.4 568.2L35.1 569.0L35.0 569.8L35.1 570.6L35.4 571.4L35.8 572.1L36.3 572.8L36.8 573.4L37.5 573.9L38.1 574.4L38.8 574.9L39.4 575.4L40.0 576.0L40.5 576.6L40.9 577.3L41.2 578.0L41.3 578.8L41.2 579.6L41.0 580.4L40.6 581.1L40.1 581.7L39.5 582.2L38.8 582.6L38.1 583.0L37.4 583.3L36.6 583.6L35.9 583.9L35.3 584.3L34.6 584.7" stroke="#000" shape-rendering="crispEdges"/>
<path d="M223.0 43.3L223.0 42.4L223.1 41.6L223.1 40.8L223.2 40.0L223.2 39.2L223.3 38.4L223.5 37.6L223.8 36.8L224.3 36.1L224.8 35.4L225.5 34.8L226.2 34.3L227.1 33.9L227.9 33.7L228.9 33.5L229.8 33.6L230.6 33.7L231.5 33.9L232.3 34.1L233.1 34.5L233.8 34.8L234.5 35.1L235.3 35.4L236.0 35.7L236.7 36.0L237.4 36.1L238.2 36.2L238.9 36.1L239.6 36.0L240.3 35.7L241.0 35.4L241.6 34.9L242.2 34.4L242.7 33.9L243.3 33.3L243.8 32.7L244.3 32.0L244.8 31.4L245.4 30.8L246.0 30.3L246.8 29.9L247.5 29.5L248.5 29.3L249.4 29.3L250.4 29.6L251.2 30.0L252.1 30.6L252.6 31.4L253.0 32.2L253.2 33.0L253.4 33.9L253.6 34.7L253.9 35.5L254.2 36.2L254.7 36.8L255.4 37.2L256.2 37.5L256.9 37.5L257.7 37.4L258.4 37.2L259.2 37.1L260.0 37.0L260.8 37.1L261.5 37.3L262.2 37.7L262.7 38.1L263.2 38.7L263.5 39.3L263.9 40.0L264.2 40.7L264.4 41.5L264.6 42.2L265.0 42.9L265.3 43.6L265.8 44.3L266.3 44.9L267.0 45.4L267.8 45.8L268.7 46.1L269.7 46.2L270.6 46.1L271.7 45.8L272.6 45.3L273.2 44.7L273.9 43.9L274.3 43.0L274.6 42.2L274.7 41.3L274.7 40.5L274.6 39.7L274.4 39.0L274.2 38.3L273.9 37.6L273.6 36.9L273.3 36.3L273.0 35.7L272.7 35.0L272.5 34.4L272.4 33.9L272.3 33.2L272.3 32.7L272.4 32.0L272.6 31.5L272.8 30.9L273.0 30.3L273.2 29.7L273.4 29.0L273.6 28.3L273.8 27.7L273.9 26.9L274.0 26.1L273.9 25.4L273.8 24.6L273.7 23.8L273.5 23.1L273.2 22.3L273.1 21.6L273.0 20.8L273.1 20.0L273.3 19.2L273.7 18.4L274.1 17.7L274.6 17.0L275.1 16.3L275.6 15.7L276.2 15.1L276.9 14.5L277.5 14.0L278.2 13.5L279.0 13.1L279.7 12.8L280.6 12.6L281.4 12.5L282.2 12.4L283.1 12.5L283.9 12.5L284.7 12.7L285.5 12.8L286.3 13.0L287.1 13.2L287.8 13.3L288.6 13.4L289.4 13.5L290.2 13.4L291.0 13.3L291.8 13.0L292.4 12.6L293.1 12.1L293.6 11.5L294.1 11.0L294.6 10.4L295.1 9.9L295.7 9.4L296.3 9.1L296.9 8.9L297.6 8.8L298.2 8.8L299.0 8.9L299.7 8.9L300.5 8.8L301.3 8.5L301.9 7.9L302.2 7.2L302.4 6.4L302.3 5.5L302.1 4.7L301.9 4.0L301.6 3.3L301.3 2.5" stroke="#000"/>
<path d="M398.3 128.3L403.2 109.8L402.0 102.4L411.8 91.3L414.3 85.2L426.6 55.6L448.8 48.2L461.0 38.3L466.0 18.6L467.3 0.0M398.3 128.3L387.0 109.8L372.4 100.0L357.6 85.2L337.9 70.4L318.2 55.6L301.0 47.0L283.7 53.0L264.0 51.9L257.6 43.3L252.7 26.0L242.8 16.2L234.2 0.0M234.2 0.0L223.1 13.7L221.9 38.3L217.0 53.1L208.3 60.5L194.8 65.4M398.3 128.3L394.6 128.3L374.9 136.9L357.6 141.8L337.9 149.2L313.3 156.6L288.6 160.3L264.0 167.7L240.4 173.8L220.7 181.2L210.8 194.0L188.6 206.3L168.9 218.6M398.3 128.3L402.0 128.3L421.7 127.0L441.4 125.8L461.1 132.0L485.7 129.5L510.4 130.7L520.2 136.9L534.0 144.3L546.3 151.7L571.0 154.1L588.2 152.9L607.9 141.8L632.5 143.0L652.3 136.9L667.0 127.0L686.7 118.4L706.5 107.3L731.1 92.5L755.7 80.2L780.4 72.8L800.0 65.4M398.3 128.3L398.3 132.0L397.0 146.7L392.1 166.5L390.9 194.0L392.1 218.6L390.9 233.4L387.2 255.6L390.9 272.8L389.6 292.5L393.3 317.2L395.8 341.8L398.3 361.5L399.5 376.3L398.3 394.0L399.5 394.0L404.4 406.3L414.3 426.0L421.7 445.7L429.1 458.1L434.0 465.4M398.3 128.3L402.0 132.0L411.8 141.8L424.1 154.1L436.5 171.4L448.8 186.2L453.7 194.0L466.0 206.3L478.3 226.0L498.0 233.4M582.0 0.0L580.8 16.2L588.2 31.0L598.0 40.8L598.0 58.0L593.1 70.4L598.0 87.6L585.7 102.4L590.7 117.2L603.0 132.0L607.9 141.8M588.2 154.1L575.9 171.4L558.6 191.1L534.0 218.6L510.4 228.5L498.0 238.3M652.3 136.9L662.1 146.7L667.0 156.6L676.9 166.5L681.8 178.8L694.1 183.7L711.4 182.5L731.1 177.5L755.7 172.6L780.4 167.7L800.0 169.4M711.4 182.5L716.3 194.0L726.2 208.8L743.4 216.2L753.3 235.9L760.7 258.1L764.4 275.3M733.6 250.7L743.4 263.0L765.6 275.3L780.4 287.6L800.0 302.4M175.1 0.0L183.7 8.8L191.1 23.6L194.8 43.3L194.8 67.9L193.6 85.2L188.6 97.5L182.5 107.3L181.2 122.1L176.3 134.4L168.9 144.3L166.5 156.6L156.6 171.4L146.7 188.6L141.8 194.0L139.4 201.4L144.3 213.7L154.1 218.6M0.0 251.2L31.0 249.4L55.6 245.7L80.2 237.1L104.9 228.5L127.0 219.9L146.7 217.4L157.0 215.0L168.9 218.6M157.8 226.0L161.5 243.3L164.0 267.9L166.5 287.6L168.9 317.2L173.8 341.8L177.5 366.5L176.3 383.7L171.4 394.0L164.0 411.2L156.6 421.1L154.1 443.3L148.0 463.0L141.8 475.3L134.4 492.5L128.3 509.8L124.6 532.0L123.3 566.5L122.1 594.0L119.6 598.6L120.9 623.3L124.6 638.1L128.3 647.9L127.0 667.6M0.0 454.4L18.6 456.8L43.3 459.3L67.9 463.0L87.6 469.1L104.9 467.4L129.5 466.7L144.3 470.4L166.5 474.1L191.1 470.4L215.7 469.1L240.4 467.9L264.0 464.2L276.3 458.1L288.6 448.2L308.3 426.0L325.6 408.8L337.9 397.7L357.6 394.0L367.5 388.6L382.3 376.3L394.6 366.5L404.4 364.0L424.1 356.6L448.8 357.8L473.4 355.4L498.0 354.1L522.7 349.2L534.0 346.7L558.6 341.8L571.0 343.0L587.0 346.7L600.5 351.7L620.2 356.6L657.2 362.8L694.1 365.2L731.1 366.5L750.8 366.5L768.0 359.1L792.7 346.7L800.0 334.4M251.5 467.9L242.8 487.6L233.0 507.3L225.6 524.6L210.8 541.8L209.6 566.5L204.6 586.2L200.9 598.6L191.1 623.3L183.7 635.6L181.2 647.9M404.4 364.0L411.8 351.7L424.1 339.4L448.8 322.1L461.1 302.4L478.3 277.8L490.7 255.6L498.0 238.3L510.4 228.5M399.5 376.3L382.3 386.2L366.0 395.0M515.3 232.2L522.7 240.8L530.1 250.7L534.0 265.4L537.7 280.2L548.8 299.9L561.1 317.2L571.0 330.7L577.1 341.8M577.1 287.6L568.5 302.4L564.8 317.2M583.3 334.4L600.5 319.6L632.5 304.9L657.2 290.1L681.8 275.3L706.5 264.2L721.2 250.7L738.5 243.3L755.7 233.4L780.4 223.6L800.0 217.4M579.6 351.7L583.3 361.5L590.7 373.8L598.0 388.6L603.0 394.0L607.9 403.9L620.2 416.2L628.9 426.0L626.4 433.4L623.9 455.6L623.9 492.5L627.6 512.3L635.0 529.5L642.4 544.3L646.1 566.5L647.7 571.7L653.0 589.5L660.1 609.0L667.2 621.4L677.8 632.0L688.5 640.9L697.3 651.5L704.4 662.1L711.9 681.5L718.9 699.0L732.9 720.0L739.9 737.4L742.5 754.9L746.9 772.4L749.5 786.0M620.2 416.2L622.0 426.0L626.4 433.4M574.6 351.7L563.6 361.5L553.7 371.4L546.3 388.6L545.1 394.0L534.0 406.3L525.2 413.7L517.8 423.6L505.4 440.8L490.7 450.7L473.4 459.3L453.7 466.7L434.0 465.4M434.0 467.9L426.6 480.2L416.7 502.4L404.4 524.6L392.1 539.4L374.9 559.1L357.6 571.4L337.9 583.7L315.7 594.0L305.0 597.7L301.4 605.0L301.4 619.9M632.5 423.6L642.4 438.3L662.1 448.2L681.8 455.6L706.5 460.5L731.1 463.0L755.7 467.9L775.4 475.3L790.2 480.2L800.0 487.6M800.0 529.5L795.2 554.1L789.5 568.2L780.6 582.4L778.9 598.3L778.9 616.0L780.6 633.8L781.5 649.7L784.2 656.8L791.3 669.2L796.6 681.6L800.0 691.0M0.0 655.3L18.6 647.9L43.3 640.5L63.0 636.8L80.2 641.8L87.6 652.8L102.4 663.9L122.1 667.6L136.9 675.0L151.7 676.2L166.5 667.6L176.3 655.3L181.2 647.9L191.1 650.4L205.9 645.4L220.7 640.5L240.4 636.8L264.0 639.3L279.0 634.0L294.0 626.3L301.4 619.9L306.9 617.1L321.7 618.9L340.2 621.7L354.9 627.2L367.9 631.9L377.1 630.0L382.6 623.5L397.4 616.2L414.0 612.5L438.0 610.6L447.3 615.2L460.2 614.3L471.3 608.8L494.0 610.6L520.5 614.0L537.1 621.4L557.4 628.8L575.9 633.4L598.0 634.3L620.2 636.2L638.7 638.9L649.5 641.7L667.2 646.2L684.9 647.1L697.3 653.3L706.2 655.9L720.4 655.0L734.5 655.9L748.7 652.4L764.7 649.7L778.9 648.8M80.2 640.5L97.5 634.4L122.1 633.1L146.7 635.6L166.5 645.4L181.2 649.1M0.0 611.0L6.3 623.3L6.3 643.0L8.8 652.8" stroke="#87731a"/>
<ellipse cx="396" cy="127" rx="35.5" ry="34.5" stroke="#87731a"/>
<ellipse cx="162.8" cy="220.6" rx="6.5" ry="5.5" stroke="#87731a"/>
<ellipse cx="578" cy="342" rx="10" ry="12.5" stroke="#87731a"/>
<ellipse cx="778" cy="651" rx="6" ry="7" stroke="#87731a"/>
<path d="M407.0 361.4A39.6 39.6 0 1 1 394.0 361.4" stroke="#ff0000"/>
<path d="M411.0 241.1A159.7 159.7 0 1 1 390.0 241.1" stroke="#e4e4e4"/>
<path d="M411.0 120.8A279.9 279.9 0 1 1 390.0 120.8" stroke="#e4e4e4"/>
<path d="M411.0 0.6A400 400 0 1 1 390.0 0.6" stroke="#e4e4e4"/>
</svg><div class="t" style="left:380.5px;width:40px;text-align:center;top:-3.1px;font-size:9.2px;letter-spacing:1.1px;color:#ffff90;font-family:'DejaVu Sans Mono','Liberation Mono',monospace;">313</div>
<div class="t" style="left:380px;width:40px;text-align:center;top:116.9px;font-size:9.2px;letter-spacing:1.1px;color:#ffff90;font-family:'DejaVu Sans Mono','Liberation Mono',monospace;">219</div>
<div class="t" style="left:380px;width:40px;text-align:center;top:236.9px;font-size:9.2px;letter-spacing:1.1px;color:#ffff90;font-family:'DejaVu Sans Mono','Liberation Mono',monospace;">125</div>
<div class="t" style="left:380px;width:40px;text-align:center;top:356.9px;font-size:9.2px;letter-spacing:1.1px;color:#ffff90;font-family:'DejaVu Sans Mono','Liberation Mono',monospace;">31</div>
<svg width="800" height="800" style="position:absolute;left:0;top:0" fill="none" stroke-width="1.2"><circle cx="137.4" cy="157.6" r="4.1" stroke="#ffc000"/><path d="M134.8 157.6H140.0" stroke="#ffc000"/><path d="M504.9 676.8H512.1M508.5 673.2V680.4" stroke="#ffb000"/><circle cx="531.6" cy="674.6" r="4.1" stroke="#ffff00"/><path d="M529.0 674.6H534.2" stroke="#ffff00"/><path d="M531.6 672.0V677.2" stroke="#ffff00"/><circle cx="568.5" cy="727.2" r="4.1" stroke="#ffff00"/><path d="M565.9 727.2H571.1" stroke="#ffff00"/><circle cx="620.6" cy="745.5" r="4.1" stroke="#ffb000"/><path d="M618.0 745.5H623.2" stroke="#ffb000"/><circle cx="593.4" cy="761.7" r="4.1" stroke="#e06010"/><path d="M590.8 761.7H596.0" stroke="#e06010"/><circle cx="620.5" cy="745.3" r="4.1" stroke="#ffb000"/><path d="M617.9 745.3H623.1" stroke="#ffb000"/><circle cx="754.4" cy="737.4" r="4.1" stroke="#ffff00"/><path d="M751.8 737.4H757.0" stroke="#ffff00"/><circle cx="718.4" cy="784.7" r="4.1" stroke="#ffa000"/><path d="M715.8 784.7H721.0" stroke="#ffa000"/></svg>
<div style="position:absolute;left:3px;top:753px;width:242px;height:42px;border:1px solid #8c8c8c;background:#000;"></div>
<div class="t" style="left:7.0px;top:756.93px;font-size:9.3px;color:#e8e8e8;font-family:'DejaVu Sans Condensed','DejaVu Sans','Liberation Sans',sans-serif;">Symbols</div>
<div class="t" style="left:47.0px;top:756.93px;font-size:9.3px;color:#fff;font-family:'DejaVu Sans','Liberation Sans',sans-serif;letter-spacing:-0.2px;">-CG</div>
<div class="t" style="left:72.0px;top:756.93px;font-size:9.3px;color:#fff;font-family:'DejaVu Sans','Liberation Sans',sans-serif;letter-spacing:-0.2px;">-IC</div>
<div class="t" style="left:93.0px;top:756.93px;font-size:9.3px;color:#fff;font-family:'DejaVu Sans','Liberation Sans',sans-serif;letter-spacing:-0.2px;">+CG</div>
<div class="t" style="left:118.0px;top:756.93px;font-size:9.3px;color:#fff;font-family:'DejaVu Sans','Liberation Sans',sans-serif;letter-spacing:-0.2px;">+IC</div>
<div class="t" style="left:147.2px;top:756.93px;font-size:9.3px;color:#e8e8e8;font-family:'DejaVu Sans Condensed','DejaVu Sans','Liberation Sans',sans-serif;">Strike age color codes</div>
<div class="t" style="left:7.0px;top:769.73px;font-size:9.3px;color:#e8e8e8;font-family:'DejaVu Sans Condensed','DejaVu Sans','Liberation Sans',sans-serif;">Recent</div>
<div class="t" style="left:7.0px;top:782.53px;font-size:9.3px;color:#e8e8e8;font-family:'DejaVu Sans Condensed','DejaVu Sans','Liberation Sans',sans-serif;">Old</div>
<div class="t" style="left:148.0px;top:769.73px;font-size:9.3px;color:#ffdd00;font-family:'DejaVu Sans Condensed','DejaVu Sans','Liberation Sans',sans-serif;">15+</div>
<div class="t" style="left:182.6px;top:769.73px;font-size:9.3px;color:#ffb400;font-family:'DejaVu Sans Condensed','DejaVu Sans','Liberation Sans',sans-serif;">30+</div>
<div class="t" style="left:217.2px;top:769.73px;font-size:9.3px;color:#ff9c00;font-family:'DejaVu Sans Condensed','DejaVu Sans','Liberation Sans',sans-serif;">45+</div>
<div class="t" style="left:148.0px;top:782.53px;font-size:9.3px;color:#e67e00;font-family:'DejaVu Sans Condensed','DejaVu Sans','Liberation Sans',sans-serif;">60+</div>
<div class="t" style="left:182.6px;top:782.53px;font-size:9.3px;color:#e65c00;font-family:'DejaVu Sans Condensed','DejaVu Sans','Liberation Sans',sans-serif;">75+</div>
<div class="t" style="left:217.2px;top:782.53px;font-size:9.3px;color:#e62e00;font-family:'DejaVu Sans Condensed','DejaVu Sans','Liberation Sans',sans-serif;">90+</div>
<svg width="800" height="800" style="position:absolute;left:0;top:0" fill="none" stroke-width="1.2"><circle cx="54.6" cy="774.4" r="4.1" stroke="#00ffff"/><path d="M52.0 774.4H57.2" stroke="#00ffff"/><path d="M75.9 774.4H82.9" stroke="#00ffff"/><circle cx="104.5" cy="774.4" r="4.1" stroke="#00ffff"/><path d="M101.9 774.4H107.1" stroke="#00ffff"/><path d="M104.5 771.8V777.0" stroke="#00ffff"/><path d="M125.9 774.4H133.1M129.5 770.8V778.0" stroke="#00ffff"/><circle cx="54.6" cy="787.3" r="4.1" stroke="#ffff00"/><path d="M52.0 787.3H57.2" stroke="#ffff00"/><path d="M75.9 787.3H82.9" stroke="#ffff00"/><circle cx="104.5" cy="787.3" r="4.1" stroke="#ffff00"/><path d="M101.9 787.3H107.1" stroke="#ffff00"/><path d="M104.5 784.7V789.9" stroke="#ffff00"/><path d="M125.9 787.3H133.1M129.5 783.7V790.9" stroke="#ffff00"/></svg>
<div style="position:absolute;left:680px;top:786px;width:120px;height:14px;background:#000;"></div>
<div class="t" style="left:683.0px;top:788.06px;font-size:9.15px;color:#fff;font-family:'DejaVu Sans Condensed','DejaVu Sans','Liberation Sans',sans-serif;">©2005 Astrogenic Systems</div></div><div class="pn" style="top:8px;height:318px;"></div>
<div class="pn" style="top:333px;height:113px;"></div>
<div class="pn" style="top:453px;height:348px;"></div>
<div class="btn" style="left:819px;top:16px;width:58px;height:18px;background:#5a0000;"></div>
<div class="btn" style="left:883px;top:16px;width:58px;height:18px;background:#333;"></div>
<div class="t" style="left:819px;width:58px;text-align:center;top:19.39px;font-size:13.5px;font-weight:bold;color:#ddd;font-family:'Liberation Serif','DejaVu Serif',serif;">STRIKE</div>
<div class="t" style="left:883px;width:58px;text-align:center;top:19.39px;font-size:13.5px;font-weight:bold;color:#c8c8c8;font-family:'Liberation Serif','DejaVu Serif',serif;">NOISE</div>
<div class="btn" style="left:994px;top:16px;width:128px;height:18px;background:#333;"></div>
<div class="t b" style="top:18.66px;font-size:13.4px;left:998.50px;">Bng 154°</div>
<div class="t b" style="top:18.66px;font-size:13.4px;right:20.00px;color:#00e000;">238mi</div>
<div class="btn" style="left:821px;top:64px;width:82px;height:16px;background:#555;color:#eee;font-size:11.8px;line-height:14px;">Strikes/min</div>
<div class="t bw" style="top:88.44px;font-size:27.5px;right:235.00px;color:#fff;">0</div>
<div class="btn" style="left:931px;top:64px;width:82px;height:16px;background:#555;color:#eee;font-size:11.8px;line-height:14px;">Close/min</div>
<div class="t bw" style="top:88.44px;font-size:27.5px;right:125.00px;color:#fff;">0</div>
<div class="btn" style="left:1041px;top:64px;width:82px;height:16px;background:#555;color:#eee;font-size:11.8px;line-height:14px;">Noises/min</div>
<div class="t bw" style="top:88.44px;font-size:27.5px;right:15.00px;color:#bbb;">0</div>
<div class="t " style="top:132.51px;font-size:12.4px;right:234.50px;color:#fff;">Total Strikes</div>
<div class="t " style="top:150.51px;font-size:12.4px;right:234.50px;color:#fff;">495</div>
<div class="t " style="top:132.51px;font-size:12.4px;right:124.50px;color:#fff;">Total Close</div>
<div class="t " style="top:150.51px;font-size:12.4px;right:124.50px;color:#fff;">0</div>
<div class="t " style="top:132.51px;font-size:12.4px;right:14.50px;color:#c8c8c8;">Total Noises</div>
<div class="t " style="top:150.51px;font-size:12.4px;right:14.50px;color:#c8c8c8;">123</div>
<div class="t " style="top:204.51px;font-size:12.4px;left:821.00px;color:#aaa;">Lightning type distribution</div>
<div style="position:absolute;left:821px;top:217px;width:302px;height:1px;background:#808080;"></div>
<div class="t b" style="top:226.51px;font-size:12.4px;left:821.00px;">Cloud-ground</div>
<div class="t " style="top:226.51px;font-size:12.4px;left:913.00px;">+</div>
<div class="bar" style="left:925px;top:227px;"><i style="width:26px;background:#ff0000;"></i></div>
<div class="t b" style="top:226.51px;font-size:12.4px;left:979.50px;">52%</div>
<div class="t b" style="top:226.51px;font-size:12.4px;left:1015.50px;">−</div>
<div class="bar" style="left:1028px;top:227px;"><i style="width:19.5px;background:#99d0ff;"></i></div>
<div class="t b" style="top:226.51px;font-size:12.4px;left:1082.50px;">39%</div>
<div class="t b" style="top:251.11px;font-size:12.4px;left:821.00px;color:#c8c8c8;">Count</div>
<div class="t b" style="top:251.11px;font-size:12.4px;left:925.00px;">258</div>
<div class="t b" style="top:251.11px;font-size:12.4px;left:1028.00px;">192</div>
<div class="t b" style="top:280.81px;font-size:12.4px;left:821.00px;">Intracloud</div>
<div class="t " style="top:280.81px;font-size:12.4px;left:913.00px;">+</div>
<div class="bar" style="left:925px;top:281px;"><i style="width:3px;background:#ff69b4;"></i></div>
<div class="t b" style="top:280.81px;font-size:12.4px;left:979.50px;">5%</div>
<div class="t b" style="top:280.81px;font-size:12.4px;left:1015.50px;">−</div>
<div class="bar" style="left:1028px;top:281px;"><i style="width:2px;background:#00e000;"></i></div>
<div class="t b" style="top:280.81px;font-size:12.4px;left:1082.50px;">4%</div>
<div class="t b" style="top:305.11px;font-size:12.4px;left:821.00px;color:#c8c8c8;">Count</div>
<div class="t b" style="top:305.11px;font-size:12.4px;left:925.00px;">27</div>
<div class="t b" style="top:305.11px;font-size:12.4px;left:1028.00px;">18</div>
<div class="t bw" style="top:340.13px;font-size:16.4px;left:821.00px;color:#00e000;">3/1/2026 11:25:19 PM</div>
<div style="position:absolute;left:821px;top:358px;width:302px;height:1px;background:#808080;"></div>
<div class="t " style="top:377.51px;font-size:12.4px;left:821.00px;">Squelch</div>
<div class="t " style="top:377.51px;font-size:12.4px;left:909.50px;">0</div>
<div class="t " style="top:377.51px;font-size:12.4px;left:981.00px;">Upload</div>
<div class="t " style="top:377.51px;font-size:12.4px;left:1061.00px;color:#bbb;">Disabled</div>
<div class="t " style="top:397.51px;font-size:12.4px;left:821.00px;">Persistence</div>
<div class="t " style="top:397.51px;font-size:12.4px;left:909.50px;">90 min</div>
<div class="t " style="top:397.51px;font-size:12.4px;left:981.00px;">Capture</div>
<div class="t " style="top:397.51px;font-size:12.4px;left:1061.00px;color:#00d000;">Active</div>
<div class="t " style="top:417.51px;font-size:12.4px;left:821.00px;">Range</div>
<div class="t " style="top:417.51px;font-size:12.4px;left:909.50px;">313 mi</div>
<div class="t " style="top:417.51px;font-size:12.4px;left:981.00px;">Receiver</div>
<div class="t " style="top:417.51px;font-size:12.4px;left:1061.00px;color:#00d000;">Enabled</div>
<div class="t " style="top:464.51px;font-size:12.4px;left:821.00px;color:#c8c8c8;">Uptime</div>
<div class="t " style="top:464.51px;font-size:12.4px;left:909.50px;">1163:10</div>
<div class="t " style="top:464.51px;font-size:12.4px;left:981.00px;color:#c8c8c8;">Peak time</div>
<div class="t " style="top:464.51px;font-size:12.4px;left:1061.00px;color:#c8c8c8;">Plot</div>
<div class="t " style="top:487.51px;font-size:12.4px;left:821.00px;color:#c8c8c8;">Peak rate</div>
<div class="t " style="top:487.51px;font-size:12.4px;left:909.50px;">6/min</div>
<div class="t " style="top:487.51px;font-size:12.4px;left:981.00px;">2:24 AM</div>
<div class="t " style="top:487.51px;font-size:12.4px;left:1061.00px;">Strike</div>
<div class="t " style="top:517.51px;font-size:12.4px;left:822.50px;color:#c8c8c8;">Trend graph</div>
<div class="t " style="top:517.51px;font-size:12.4px;left:909.00px;">60 min</div>
<svg style="position:absolute;left:0;top:0" width="1138" height="812" shape-rendering="crispEdges" fill="none" stroke="#d8d8d8" stroke-width="1"><path d="M1088.5 542.5V777.5"/><path d="M1086.0 738.5H1090.0"/><path d="M1084.0 699.5H1089.0"/><path d="M1086.0 660.5H1090.0"/><path d="M1084.0 620.5H1089.0"/><path d="M1086.0 581.5H1090.0"/><path d="M1084.0 542.5H1089.0"/><path d="M1088.5 774.0V777.5"/><path d="M1044.5 774.0V777.5"/><path d="M999.5 774.0V777.5"/><path d="M955.5 774.0V777.5"/><path d="M911.5 774.0V777.5"/><path d="M866.5 774.0V777.5"/><path d="M822.5 774.0V777.5"/><path d="M822.5 777.5L836.6 777.5L838.5 769.7L841.1 769.7L843.0 777.5L912.5 777.5L914.4 769.7L917.0 769.7L918.9 777.5L930.4 777.5L933.3 761.8L935.9 761.8L938.8 777.5L955.8 777.5L957.7 769.7L960.3 769.7L962.2 777.5L968.1 777.5L970.0 769.7L972.6 769.7L974.5 777.5L995.0 777.5L996.9 769.7L999.5 769.7L1001.4 777.5L1019.3 777.5L1021.2 769.7L1023.8 769.7L1025.7 777.5L1065.8 777.5L1067.7 769.7L1070.3 769.7L1072.2 777.5L1074.6 777.5L1076.5 769.7L1079.1 769.7L1081.0 777.5L1083.3 777.5L1085.2 769.7L1088.5 769.7" stroke="#ececec"/></svg>
<div class="t " style="top:536.98px;font-size:10.9px;left:1092.00px;color:#c8c8c8;">30</div>
<div class="t " style="top:615.48px;font-size:10.9px;left:1092.00px;color:#c8c8c8;">20</div>
<div class="t " style="top:693.48px;font-size:10.9px;left:1092.00px;color:#c8c8c8;">10</div>
<div class="t " style="top:784.58px;font-size:10.9px;left:1086.50px;color:#c8c8c8;">0</div>
<div class="t " style="top:784.58px;font-size:10.9px;left:1042.17px;color:#c8c8c8;">10</div>
<div class="t " style="top:784.58px;font-size:10.9px;left:997.83px;color:#c8c8c8;">20</div>
<div class="t " style="top:784.58px;font-size:10.9px;left:953.50px;color:#c8c8c8;">30</div>
<div class="t " style="top:784.58px;font-size:10.9px;left:909.17px;color:#c8c8c8;">40</div>
<div class="t " style="top:784.58px;font-size:10.9px;left:864.83px;color:#c8c8c8;">50</div>
<div class="t " style="top:784.58px;font-size:10.9px;left:820.50px;color:#c8c8c8;">60</div>
<div class="t " style="top:784.58px;font-size:10.9px;left:1100.50px;color:#c8c8c8;">min</div></body></html>
